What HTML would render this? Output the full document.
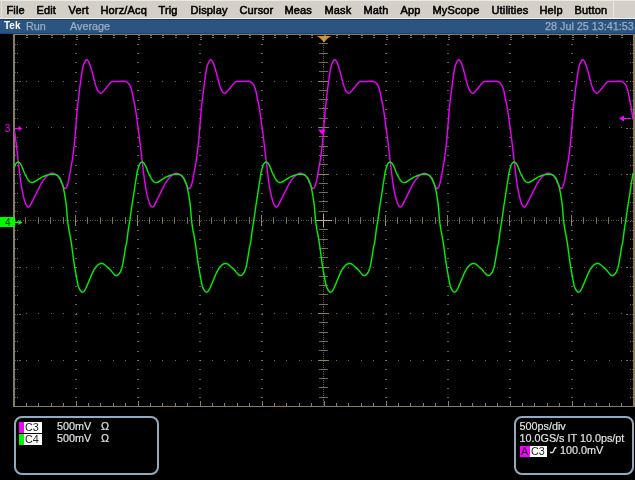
<!DOCTYPE html>
<html><head><meta charset="utf-8">
<style>
html,body{margin:0;padding:0;}
body{width:635px;height:480px;background:#000;position:relative;overflow:hidden;font-family:"Liberation Sans",sans-serif;}
#root{position:absolute;left:0;top:0;width:635px;height:480px;will-change:transform;}
#menu{position:absolute;left:0;top:0;width:635px;height:18px;background:#d4d0c8;border-top:1px solid #ebe9e4;box-sizing:border-box;}
#menu span{position:absolute;top:3px;font-size:11px;color:#000;line-height:13px;white-space:nowrap;-webkit-text-stroke:0.55px #000;letter-spacing:0.15px;}
#msep{position:absolute;left:613px;top:0;width:1px;height:18px;background:#e8e6e0;}
#hl{position:absolute;left:0;top:18px;width:635px;height:1px;background:#f2f0ea;}
#status{position:absolute;left:0;top:19px;width:635px;height:15px;background:#2a5582;border-top:1px solid #1d3c60;border-bottom:1px solid #1f4068;box-sizing:border-box;}
#status span{position:absolute;top:0px;font-size:10.8px;line-height:12px;color:#9cacc0;white-space:nowrap;-webkit-text-stroke:0.25px #9cacc0;}
svg{position:absolute;left:0;top:0;}
.panel{position:absolute;border:2px solid #93a9bf;border-radius:8px;box-sizing:border-box;}
.t{position:absolute;font-size:10.8px;line-height:12px;color:#e0e0e0;white-space:nowrap;-webkit-text-stroke:0.2px currentColor;}
.box{position:absolute;height:11px;}
</style></head><body><div id="root">
<div id="menu">
<span style="left:6.5px">File</span>
<span style="left:36.5px">Edit</span>
<span style="left:68.5px">Vert</span>
<span style="left:100.5px">Horz/Acq</span>
<span style="left:158.5px">Trig</span>
<span style="left:190.5px">Display</span>
<span style="left:239.5px">Cursor</span>
<span style="left:284.5px">Meas</span>
<span style="left:324.5px">Mask</span>
<span style="left:363.5px">Math</span>
<span style="left:400.5px">App</span>
<span style="left:432.5px">MyScope</span>
<span style="left:491.5px">Utilities</span>
<span style="left:539.5px">Help</span>
<span style="left:574.5px">Button</span>
</div>
<div id="msep"></div><div style="position:absolute;left:1px;top:0;width:1px;height:18px;background:#e6e3dc;"></div>
<div id="hl"></div>
<div id="status">
<span style="left:4px;color:#fff;font-weight:bold;font-size:10px;-webkit-text-stroke:0;">Tek</span>
<span style="left:26px">Run</span>
<span style="left:70px">Average</span>
<span style="left:545px">28 Jul 25 13:41:53</span>
</div>
<svg width="635" height="480" viewBox="0 0 635 480" shape-rendering="crispEdges">
<rect x="13" y="34" width="621" height="1" fill="#877d5e"/>
<rect x="13" y="406" width="621" height="1" fill="#877d5e"/>
<rect x="13" y="34" width="1.6" height="373" fill="#877d5e"/>
<rect x="633" y="34" width="2" height="373" fill="#877d5e"/>
<rect x="26" y="35" width="2" height="1" fill="#b8ac86" opacity="0.65"/><rect x="26" y="37" width="2" height="1" fill="#b8ac86" opacity="0.65"/>
<rect x="26" y="403" width="1" height="3" fill="#b8ac86" opacity="0.75"/>
<rect x="38" y="35" width="2" height="1" fill="#b8ac86" opacity="0.65"/><rect x="38" y="37" width="2" height="1" fill="#b8ac86" opacity="0.65"/>
<rect x="38" y="403" width="1" height="3" fill="#b8ac86" opacity="0.75"/>
<rect x="51" y="35" width="2" height="1" fill="#b8ac86" opacity="0.65"/><rect x="51" y="37" width="2" height="1" fill="#b8ac86" opacity="0.65"/>
<rect x="51" y="403" width="1" height="3" fill="#b8ac86" opacity="0.75"/>
<rect x="63" y="35" width="2" height="1" fill="#b8ac86" opacity="0.65"/><rect x="63" y="37" width="2" height="1" fill="#b8ac86" opacity="0.65"/>
<rect x="63" y="403" width="1" height="3" fill="#b8ac86" opacity="0.75"/>
<rect x="76" y="35" width="2" height="1" fill="#b8ac86" opacity="0.65"/><rect x="76" y="37" width="2" height="1" fill="#b8ac86" opacity="0.65"/><rect x="76" y="39" width="2" height="1" fill="#b8ac86" opacity="0.65"/>
<rect x="76" y="401" width="1" height="5" fill="#b8ac86" opacity="0.75"/>
<rect x="88" y="35" width="2" height="1" fill="#b8ac86" opacity="0.65"/><rect x="88" y="37" width="2" height="1" fill="#b8ac86" opacity="0.65"/>
<rect x="88" y="403" width="1" height="3" fill="#b8ac86" opacity="0.75"/>
<rect x="100" y="35" width="2" height="1" fill="#b8ac86" opacity="0.65"/><rect x="100" y="37" width="2" height="1" fill="#b8ac86" opacity="0.65"/>
<rect x="100" y="403" width="1" height="3" fill="#b8ac86" opacity="0.75"/>
<rect x="113" y="35" width="2" height="1" fill="#b8ac86" opacity="0.65"/><rect x="113" y="37" width="2" height="1" fill="#b8ac86" opacity="0.65"/>
<rect x="113" y="403" width="1" height="3" fill="#b8ac86" opacity="0.75"/>
<rect x="125" y="35" width="2" height="1" fill="#b8ac86" opacity="0.65"/><rect x="125" y="37" width="2" height="1" fill="#b8ac86" opacity="0.65"/>
<rect x="125" y="403" width="1" height="3" fill="#b8ac86" opacity="0.75"/>
<rect x="138" y="35" width="2" height="1" fill="#b8ac86" opacity="0.65"/><rect x="138" y="37" width="2" height="1" fill="#b8ac86" opacity="0.65"/><rect x="138" y="39" width="2" height="1" fill="#b8ac86" opacity="0.65"/>
<rect x="138" y="401" width="1" height="5" fill="#b8ac86" opacity="0.75"/>
<rect x="150" y="35" width="2" height="1" fill="#b8ac86" opacity="0.65"/><rect x="150" y="37" width="2" height="1" fill="#b8ac86" opacity="0.65"/>
<rect x="150" y="403" width="1" height="3" fill="#b8ac86" opacity="0.75"/>
<rect x="162" y="35" width="2" height="1" fill="#b8ac86" opacity="0.65"/><rect x="162" y="37" width="2" height="1" fill="#b8ac86" opacity="0.65"/>
<rect x="162" y="403" width="1" height="3" fill="#b8ac86" opacity="0.75"/>
<rect x="175" y="35" width="2" height="1" fill="#b8ac86" opacity="0.65"/><rect x="175" y="37" width="2" height="1" fill="#b8ac86" opacity="0.65"/>
<rect x="175" y="403" width="1" height="3" fill="#b8ac86" opacity="0.75"/>
<rect x="187" y="35" width="2" height="1" fill="#b8ac86" opacity="0.65"/><rect x="187" y="37" width="2" height="1" fill="#b8ac86" opacity="0.65"/>
<rect x="187" y="403" width="1" height="3" fill="#b8ac86" opacity="0.75"/>
<rect x="200" y="35" width="2" height="1" fill="#b8ac86" opacity="0.65"/><rect x="200" y="37" width="2" height="1" fill="#b8ac86" opacity="0.65"/><rect x="200" y="39" width="2" height="1" fill="#b8ac86" opacity="0.65"/>
<rect x="200" y="401" width="1" height="5" fill="#b8ac86" opacity="0.75"/>
<rect x="212" y="35" width="2" height="1" fill="#b8ac86" opacity="0.65"/><rect x="212" y="37" width="2" height="1" fill="#b8ac86" opacity="0.65"/>
<rect x="212" y="403" width="1" height="3" fill="#b8ac86" opacity="0.75"/>
<rect x="224" y="35" width="2" height="1" fill="#b8ac86" opacity="0.65"/><rect x="224" y="37" width="2" height="1" fill="#b8ac86" opacity="0.65"/>
<rect x="224" y="403" width="1" height="3" fill="#b8ac86" opacity="0.75"/>
<rect x="237" y="35" width="2" height="1" fill="#b8ac86" opacity="0.65"/><rect x="237" y="37" width="2" height="1" fill="#b8ac86" opacity="0.65"/>
<rect x="237" y="403" width="1" height="3" fill="#b8ac86" opacity="0.75"/>
<rect x="249" y="35" width="2" height="1" fill="#b8ac86" opacity="0.65"/><rect x="249" y="37" width="2" height="1" fill="#b8ac86" opacity="0.65"/>
<rect x="249" y="403" width="1" height="3" fill="#b8ac86" opacity="0.75"/>
<rect x="262" y="35" width="2" height="1" fill="#b8ac86" opacity="0.65"/><rect x="262" y="37" width="2" height="1" fill="#b8ac86" opacity="0.65"/><rect x="262" y="39" width="2" height="1" fill="#b8ac86" opacity="0.65"/>
<rect x="262" y="401" width="1" height="5" fill="#b8ac86" opacity="0.75"/>
<rect x="274" y="35" width="2" height="1" fill="#b8ac86" opacity="0.65"/><rect x="274" y="37" width="2" height="1" fill="#b8ac86" opacity="0.65"/>
<rect x="274" y="403" width="1" height="3" fill="#b8ac86" opacity="0.75"/>
<rect x="286" y="35" width="2" height="1" fill="#b8ac86" opacity="0.65"/><rect x="286" y="37" width="2" height="1" fill="#b8ac86" opacity="0.65"/>
<rect x="286" y="403" width="1" height="3" fill="#b8ac86" opacity="0.75"/>
<rect x="299" y="35" width="2" height="1" fill="#b8ac86" opacity="0.65"/><rect x="299" y="37" width="2" height="1" fill="#b8ac86" opacity="0.65"/>
<rect x="299" y="403" width="1" height="3" fill="#b8ac86" opacity="0.75"/>
<rect x="311" y="35" width="2" height="1" fill="#b8ac86" opacity="0.65"/><rect x="311" y="37" width="2" height="1" fill="#b8ac86" opacity="0.65"/>
<rect x="311" y="403" width="1" height="3" fill="#b8ac86" opacity="0.75"/>
<rect x="324" y="35" width="2" height="1" fill="#b8ac86" opacity="0.65"/><rect x="324" y="37" width="2" height="1" fill="#b8ac86" opacity="0.65"/><rect x="324" y="39" width="2" height="1" fill="#b8ac86" opacity="0.65"/>
<rect x="324" y="401" width="1" height="5" fill="#b8ac86" opacity="0.75"/>
<rect x="336" y="35" width="2" height="1" fill="#b8ac86" opacity="0.65"/><rect x="336" y="37" width="2" height="1" fill="#b8ac86" opacity="0.65"/>
<rect x="336" y="403" width="1" height="3" fill="#b8ac86" opacity="0.75"/>
<rect x="348" y="35" width="2" height="1" fill="#b8ac86" opacity="0.65"/><rect x="348" y="37" width="2" height="1" fill="#b8ac86" opacity="0.65"/>
<rect x="348" y="403" width="1" height="3" fill="#b8ac86" opacity="0.75"/>
<rect x="361" y="35" width="2" height="1" fill="#b8ac86" opacity="0.65"/><rect x="361" y="37" width="2" height="1" fill="#b8ac86" opacity="0.65"/>
<rect x="361" y="403" width="1" height="3" fill="#b8ac86" opacity="0.75"/>
<rect x="373" y="35" width="2" height="1" fill="#b8ac86" opacity="0.65"/><rect x="373" y="37" width="2" height="1" fill="#b8ac86" opacity="0.65"/>
<rect x="373" y="403" width="1" height="3" fill="#b8ac86" opacity="0.75"/>
<rect x="386" y="35" width="2" height="1" fill="#b8ac86" opacity="0.65"/><rect x="386" y="37" width="2" height="1" fill="#b8ac86" opacity="0.65"/><rect x="386" y="39" width="2" height="1" fill="#b8ac86" opacity="0.65"/>
<rect x="386" y="401" width="1" height="5" fill="#b8ac86" opacity="0.75"/>
<rect x="398" y="35" width="2" height="1" fill="#b8ac86" opacity="0.65"/><rect x="398" y="37" width="2" height="1" fill="#b8ac86" opacity="0.65"/>
<rect x="398" y="403" width="1" height="3" fill="#b8ac86" opacity="0.75"/>
<rect x="410" y="35" width="2" height="1" fill="#b8ac86" opacity="0.65"/><rect x="410" y="37" width="2" height="1" fill="#b8ac86" opacity="0.65"/>
<rect x="410" y="403" width="1" height="3" fill="#b8ac86" opacity="0.75"/>
<rect x="423" y="35" width="2" height="1" fill="#b8ac86" opacity="0.65"/><rect x="423" y="37" width="2" height="1" fill="#b8ac86" opacity="0.65"/>
<rect x="423" y="403" width="1" height="3" fill="#b8ac86" opacity="0.75"/>
<rect x="435" y="35" width="2" height="1" fill="#b8ac86" opacity="0.65"/><rect x="435" y="37" width="2" height="1" fill="#b8ac86" opacity="0.65"/>
<rect x="435" y="403" width="1" height="3" fill="#b8ac86" opacity="0.75"/>
<rect x="448" y="35" width="2" height="1" fill="#b8ac86" opacity="0.65"/><rect x="448" y="37" width="2" height="1" fill="#b8ac86" opacity="0.65"/><rect x="448" y="39" width="2" height="1" fill="#b8ac86" opacity="0.65"/>
<rect x="448" y="401" width="1" height="5" fill="#b8ac86" opacity="0.75"/>
<rect x="460" y="35" width="2" height="1" fill="#b8ac86" opacity="0.65"/><rect x="460" y="37" width="2" height="1" fill="#b8ac86" opacity="0.65"/>
<rect x="460" y="403" width="1" height="3" fill="#b8ac86" opacity="0.75"/>
<rect x="472" y="35" width="2" height="1" fill="#b8ac86" opacity="0.65"/><rect x="472" y="37" width="2" height="1" fill="#b8ac86" opacity="0.65"/>
<rect x="472" y="403" width="1" height="3" fill="#b8ac86" opacity="0.75"/>
<rect x="485" y="35" width="2" height="1" fill="#b8ac86" opacity="0.65"/><rect x="485" y="37" width="2" height="1" fill="#b8ac86" opacity="0.65"/>
<rect x="485" y="403" width="1" height="3" fill="#b8ac86" opacity="0.75"/>
<rect x="497" y="35" width="2" height="1" fill="#b8ac86" opacity="0.65"/><rect x="497" y="37" width="2" height="1" fill="#b8ac86" opacity="0.65"/>
<rect x="497" y="403" width="1" height="3" fill="#b8ac86" opacity="0.75"/>
<rect x="510" y="35" width="2" height="1" fill="#b8ac86" opacity="0.65"/><rect x="510" y="37" width="2" height="1" fill="#b8ac86" opacity="0.65"/><rect x="510" y="39" width="2" height="1" fill="#b8ac86" opacity="0.65"/>
<rect x="510" y="401" width="1" height="5" fill="#b8ac86" opacity="0.75"/>
<rect x="522" y="35" width="2" height="1" fill="#b8ac86" opacity="0.65"/><rect x="522" y="37" width="2" height="1" fill="#b8ac86" opacity="0.65"/>
<rect x="522" y="403" width="1" height="3" fill="#b8ac86" opacity="0.75"/>
<rect x="534" y="35" width="2" height="1" fill="#b8ac86" opacity="0.65"/><rect x="534" y="37" width="2" height="1" fill="#b8ac86" opacity="0.65"/>
<rect x="534" y="403" width="1" height="3" fill="#b8ac86" opacity="0.75"/>
<rect x="547" y="35" width="2" height="1" fill="#b8ac86" opacity="0.65"/><rect x="547" y="37" width="2" height="1" fill="#b8ac86" opacity="0.65"/>
<rect x="547" y="403" width="1" height="3" fill="#b8ac86" opacity="0.75"/>
<rect x="559" y="35" width="2" height="1" fill="#b8ac86" opacity="0.65"/><rect x="559" y="37" width="2" height="1" fill="#b8ac86" opacity="0.65"/>
<rect x="559" y="403" width="1" height="3" fill="#b8ac86" opacity="0.75"/>
<rect x="572" y="35" width="2" height="1" fill="#b8ac86" opacity="0.65"/><rect x="572" y="37" width="2" height="1" fill="#b8ac86" opacity="0.65"/><rect x="572" y="39" width="2" height="1" fill="#b8ac86" opacity="0.65"/>
<rect x="572" y="401" width="1" height="5" fill="#b8ac86" opacity="0.75"/>
<rect x="584" y="35" width="2" height="1" fill="#b8ac86" opacity="0.65"/><rect x="584" y="37" width="2" height="1" fill="#b8ac86" opacity="0.65"/>
<rect x="584" y="403" width="1" height="3" fill="#b8ac86" opacity="0.75"/>
<rect x="596" y="35" width="2" height="1" fill="#b8ac86" opacity="0.65"/><rect x="596" y="37" width="2" height="1" fill="#b8ac86" opacity="0.65"/>
<rect x="596" y="403" width="1" height="3" fill="#b8ac86" opacity="0.75"/>
<rect x="609" y="35" width="2" height="1" fill="#b8ac86" opacity="0.65"/><rect x="609" y="37" width="2" height="1" fill="#b8ac86" opacity="0.65"/>
<rect x="609" y="403" width="1" height="3" fill="#b8ac86" opacity="0.75"/>
<rect x="621" y="35" width="2" height="1" fill="#b8ac86" opacity="0.65"/><rect x="621" y="37" width="2" height="1" fill="#b8ac86" opacity="0.65"/>
<rect x="621" y="403" width="1" height="3" fill="#b8ac86" opacity="0.75"/>
<rect x="15" y="44" width="1" height="1" fill="#b8ac86" opacity="0.5"/><rect x="17" y="44" width="1" height="1" fill="#b8ac86" opacity="0.65"/>
<rect x="630" y="44" width="1" height="1" fill="#b8ac86" opacity="0.65"/><rect x="632" y="44" width="1" height="1" fill="#b8ac86" opacity="0.5"/>
<rect x="15" y="53" width="1" height="1" fill="#b8ac86" opacity="0.5"/><rect x="17" y="53" width="1" height="1" fill="#b8ac86" opacity="0.65"/>
<rect x="630" y="53" width="1" height="1" fill="#b8ac86" opacity="0.65"/><rect x="632" y="53" width="1" height="1" fill="#b8ac86" opacity="0.5"/>
<rect x="15" y="62" width="1" height="1" fill="#b8ac86" opacity="0.5"/><rect x="17" y="62" width="1" height="1" fill="#b8ac86" opacity="0.65"/>
<rect x="630" y="62" width="1" height="1" fill="#b8ac86" opacity="0.65"/><rect x="632" y="62" width="1" height="1" fill="#b8ac86" opacity="0.5"/>
<rect x="15" y="72" width="1" height="1" fill="#b8ac86" opacity="0.5"/><rect x="17" y="72" width="1" height="1" fill="#b8ac86" opacity="0.65"/>
<rect x="630" y="72" width="1" height="1" fill="#b8ac86" opacity="0.65"/><rect x="632" y="72" width="1" height="1" fill="#b8ac86" opacity="0.5"/>
<rect x="15" y="81" width="1" height="1" fill="#b8ac86" opacity="0.5"/><rect x="17" y="81" width="1" height="1" fill="#b8ac86" opacity="0.65"/>
<rect x="630" y="81" width="1" height="1" fill="#b8ac86" opacity="0.65"/><rect x="632" y="81" width="1" height="1" fill="#b8ac86" opacity="0.5"/>
<rect x="19" y="81" width="2" height="1" fill="#b8ac86" opacity="0.6"/><rect x="626" y="81" width="2" height="1" fill="#b8ac86" opacity="0.6"/>
<rect x="15" y="90" width="1" height="1" fill="#b8ac86" opacity="0.5"/><rect x="17" y="90" width="1" height="1" fill="#b8ac86" opacity="0.65"/>
<rect x="630" y="90" width="1" height="1" fill="#b8ac86" opacity="0.65"/><rect x="632" y="90" width="1" height="1" fill="#b8ac86" opacity="0.5"/>
<rect x="15" y="100" width="1" height="1" fill="#b8ac86" opacity="0.5"/><rect x="17" y="100" width="1" height="1" fill="#b8ac86" opacity="0.65"/>
<rect x="630" y="100" width="1" height="1" fill="#b8ac86" opacity="0.65"/><rect x="632" y="100" width="1" height="1" fill="#b8ac86" opacity="0.5"/>
<rect x="15" y="109" width="1" height="1" fill="#b8ac86" opacity="0.5"/><rect x="17" y="109" width="1" height="1" fill="#b8ac86" opacity="0.65"/>
<rect x="630" y="109" width="1" height="1" fill="#b8ac86" opacity="0.65"/><rect x="632" y="109" width="1" height="1" fill="#b8ac86" opacity="0.5"/>
<rect x="15" y="118" width="1" height="1" fill="#b8ac86" opacity="0.5"/><rect x="17" y="118" width="1" height="1" fill="#b8ac86" opacity="0.65"/>
<rect x="630" y="118" width="1" height="1" fill="#b8ac86" opacity="0.65"/><rect x="632" y="118" width="1" height="1" fill="#b8ac86" opacity="0.5"/>
<rect x="15" y="128" width="1" height="1" fill="#b8ac86" opacity="0.5"/><rect x="17" y="128" width="1" height="1" fill="#b8ac86" opacity="0.65"/>
<rect x="630" y="128" width="1" height="1" fill="#b8ac86" opacity="0.65"/><rect x="632" y="128" width="1" height="1" fill="#b8ac86" opacity="0.5"/>
<rect x="19" y="128" width="2" height="1" fill="#b8ac86" opacity="0.6"/><rect x="626" y="128" width="2" height="1" fill="#b8ac86" opacity="0.6"/>
<rect x="15" y="137" width="1" height="1" fill="#b8ac86" opacity="0.5"/><rect x="17" y="137" width="1" height="1" fill="#b8ac86" opacity="0.65"/>
<rect x="630" y="137" width="1" height="1" fill="#b8ac86" opacity="0.65"/><rect x="632" y="137" width="1" height="1" fill="#b8ac86" opacity="0.5"/>
<rect x="15" y="146" width="1" height="1" fill="#b8ac86" opacity="0.5"/><rect x="17" y="146" width="1" height="1" fill="#b8ac86" opacity="0.65"/>
<rect x="630" y="146" width="1" height="1" fill="#b8ac86" opacity="0.65"/><rect x="632" y="146" width="1" height="1" fill="#b8ac86" opacity="0.5"/>
<rect x="15" y="155" width="1" height="1" fill="#b8ac86" opacity="0.5"/><rect x="17" y="155" width="1" height="1" fill="#b8ac86" opacity="0.65"/>
<rect x="630" y="155" width="1" height="1" fill="#b8ac86" opacity="0.65"/><rect x="632" y="155" width="1" height="1" fill="#b8ac86" opacity="0.5"/>
<rect x="15" y="165" width="1" height="1" fill="#b8ac86" opacity="0.5"/><rect x="17" y="165" width="1" height="1" fill="#b8ac86" opacity="0.65"/>
<rect x="630" y="165" width="1" height="1" fill="#b8ac86" opacity="0.65"/><rect x="632" y="165" width="1" height="1" fill="#b8ac86" opacity="0.5"/>
<rect x="15" y="174" width="1" height="1" fill="#b8ac86" opacity="0.5"/><rect x="17" y="174" width="1" height="1" fill="#b8ac86" opacity="0.65"/>
<rect x="630" y="174" width="1" height="1" fill="#b8ac86" opacity="0.65"/><rect x="632" y="174" width="1" height="1" fill="#b8ac86" opacity="0.5"/>
<rect x="19" y="174" width="2" height="1" fill="#b8ac86" opacity="0.6"/><rect x="626" y="174" width="2" height="1" fill="#b8ac86" opacity="0.6"/>
<rect x="15" y="183" width="1" height="1" fill="#b8ac86" opacity="0.5"/><rect x="17" y="183" width="1" height="1" fill="#b8ac86" opacity="0.65"/>
<rect x="630" y="183" width="1" height="1" fill="#b8ac86" opacity="0.65"/><rect x="632" y="183" width="1" height="1" fill="#b8ac86" opacity="0.5"/>
<rect x="15" y="193" width="1" height="1" fill="#b8ac86" opacity="0.5"/><rect x="17" y="193" width="1" height="1" fill="#b8ac86" opacity="0.65"/>
<rect x="630" y="193" width="1" height="1" fill="#b8ac86" opacity="0.65"/><rect x="632" y="193" width="1" height="1" fill="#b8ac86" opacity="0.5"/>
<rect x="15" y="202" width="1" height="1" fill="#b8ac86" opacity="0.5"/><rect x="17" y="202" width="1" height="1" fill="#b8ac86" opacity="0.65"/>
<rect x="630" y="202" width="1" height="1" fill="#b8ac86" opacity="0.65"/><rect x="632" y="202" width="1" height="1" fill="#b8ac86" opacity="0.5"/>
<rect x="15" y="211" width="1" height="1" fill="#b8ac86" opacity="0.5"/><rect x="17" y="211" width="1" height="1" fill="#b8ac86" opacity="0.65"/>
<rect x="630" y="211" width="1" height="1" fill="#b8ac86" opacity="0.65"/><rect x="632" y="211" width="1" height="1" fill="#b8ac86" opacity="0.5"/>
<rect x="15" y="221" width="1" height="1" fill="#b8ac86" opacity="0.5"/><rect x="17" y="221" width="1" height="1" fill="#b8ac86" opacity="0.65"/>
<rect x="630" y="221" width="1" height="1" fill="#b8ac86" opacity="0.65"/><rect x="632" y="221" width="1" height="1" fill="#b8ac86" opacity="0.5"/>
<rect x="19" y="221" width="2" height="1" fill="#b8ac86" opacity="0.6"/><rect x="626" y="221" width="2" height="1" fill="#b8ac86" opacity="0.6"/>
<rect x="15" y="230" width="1" height="1" fill="#b8ac86" opacity="0.5"/><rect x="17" y="230" width="1" height="1" fill="#b8ac86" opacity="0.65"/>
<rect x="630" y="230" width="1" height="1" fill="#b8ac86" opacity="0.65"/><rect x="632" y="230" width="1" height="1" fill="#b8ac86" opacity="0.5"/>
<rect x="15" y="239" width="1" height="1" fill="#b8ac86" opacity="0.5"/><rect x="17" y="239" width="1" height="1" fill="#b8ac86" opacity="0.65"/>
<rect x="630" y="239" width="1" height="1" fill="#b8ac86" opacity="0.65"/><rect x="632" y="239" width="1" height="1" fill="#b8ac86" opacity="0.5"/>
<rect x="15" y="248" width="1" height="1" fill="#b8ac86" opacity="0.5"/><rect x="17" y="248" width="1" height="1" fill="#b8ac86" opacity="0.65"/>
<rect x="630" y="248" width="1" height="1" fill="#b8ac86" opacity="0.65"/><rect x="632" y="248" width="1" height="1" fill="#b8ac86" opacity="0.5"/>
<rect x="15" y="258" width="1" height="1" fill="#b8ac86" opacity="0.5"/><rect x="17" y="258" width="1" height="1" fill="#b8ac86" opacity="0.65"/>
<rect x="630" y="258" width="1" height="1" fill="#b8ac86" opacity="0.65"/><rect x="632" y="258" width="1" height="1" fill="#b8ac86" opacity="0.5"/>
<rect x="15" y="267" width="1" height="1" fill="#b8ac86" opacity="0.5"/><rect x="17" y="267" width="1" height="1" fill="#b8ac86" opacity="0.65"/>
<rect x="630" y="267" width="1" height="1" fill="#b8ac86" opacity="0.65"/><rect x="632" y="267" width="1" height="1" fill="#b8ac86" opacity="0.5"/>
<rect x="19" y="267" width="2" height="1" fill="#b8ac86" opacity="0.6"/><rect x="626" y="267" width="2" height="1" fill="#b8ac86" opacity="0.6"/>
<rect x="15" y="276" width="1" height="1" fill="#b8ac86" opacity="0.5"/><rect x="17" y="276" width="1" height="1" fill="#b8ac86" opacity="0.65"/>
<rect x="630" y="276" width="1" height="1" fill="#b8ac86" opacity="0.65"/><rect x="632" y="276" width="1" height="1" fill="#b8ac86" opacity="0.5"/>
<rect x="15" y="286" width="1" height="1" fill="#b8ac86" opacity="0.5"/><rect x="17" y="286" width="1" height="1" fill="#b8ac86" opacity="0.65"/>
<rect x="630" y="286" width="1" height="1" fill="#b8ac86" opacity="0.65"/><rect x="632" y="286" width="1" height="1" fill="#b8ac86" opacity="0.5"/>
<rect x="15" y="295" width="1" height="1" fill="#b8ac86" opacity="0.5"/><rect x="17" y="295" width="1" height="1" fill="#b8ac86" opacity="0.65"/>
<rect x="630" y="295" width="1" height="1" fill="#b8ac86" opacity="0.65"/><rect x="632" y="295" width="1" height="1" fill="#b8ac86" opacity="0.5"/>
<rect x="15" y="304" width="1" height="1" fill="#b8ac86" opacity="0.5"/><rect x="17" y="304" width="1" height="1" fill="#b8ac86" opacity="0.65"/>
<rect x="630" y="304" width="1" height="1" fill="#b8ac86" opacity="0.65"/><rect x="632" y="304" width="1" height="1" fill="#b8ac86" opacity="0.5"/>
<rect x="15" y="314" width="1" height="1" fill="#b8ac86" opacity="0.5"/><rect x="17" y="314" width="1" height="1" fill="#b8ac86" opacity="0.65"/>
<rect x="630" y="314" width="1" height="1" fill="#b8ac86" opacity="0.65"/><rect x="632" y="314" width="1" height="1" fill="#b8ac86" opacity="0.5"/>
<rect x="19" y="314" width="2" height="1" fill="#b8ac86" opacity="0.6"/><rect x="626" y="314" width="2" height="1" fill="#b8ac86" opacity="0.6"/>
<rect x="15" y="323" width="1" height="1" fill="#b8ac86" opacity="0.5"/><rect x="17" y="323" width="1" height="1" fill="#b8ac86" opacity="0.65"/>
<rect x="630" y="323" width="1" height="1" fill="#b8ac86" opacity="0.65"/><rect x="632" y="323" width="1" height="1" fill="#b8ac86" opacity="0.5"/>
<rect x="15" y="332" width="1" height="1" fill="#b8ac86" opacity="0.5"/><rect x="17" y="332" width="1" height="1" fill="#b8ac86" opacity="0.65"/>
<rect x="630" y="332" width="1" height="1" fill="#b8ac86" opacity="0.65"/><rect x="632" y="332" width="1" height="1" fill="#b8ac86" opacity="0.5"/>
<rect x="15" y="341" width="1" height="1" fill="#b8ac86" opacity="0.5"/><rect x="17" y="341" width="1" height="1" fill="#b8ac86" opacity="0.65"/>
<rect x="630" y="341" width="1" height="1" fill="#b8ac86" opacity="0.65"/><rect x="632" y="341" width="1" height="1" fill="#b8ac86" opacity="0.5"/>
<rect x="15" y="351" width="1" height="1" fill="#b8ac86" opacity="0.5"/><rect x="17" y="351" width="1" height="1" fill="#b8ac86" opacity="0.65"/>
<rect x="630" y="351" width="1" height="1" fill="#b8ac86" opacity="0.65"/><rect x="632" y="351" width="1" height="1" fill="#b8ac86" opacity="0.5"/>
<rect x="15" y="360" width="1" height="1" fill="#b8ac86" opacity="0.5"/><rect x="17" y="360" width="1" height="1" fill="#b8ac86" opacity="0.65"/>
<rect x="630" y="360" width="1" height="1" fill="#b8ac86" opacity="0.65"/><rect x="632" y="360" width="1" height="1" fill="#b8ac86" opacity="0.5"/>
<rect x="19" y="360" width="2" height="1" fill="#b8ac86" opacity="0.6"/><rect x="626" y="360" width="2" height="1" fill="#b8ac86" opacity="0.6"/>
<rect x="15" y="369" width="1" height="1" fill="#b8ac86" opacity="0.5"/><rect x="17" y="369" width="1" height="1" fill="#b8ac86" opacity="0.65"/>
<rect x="630" y="369" width="1" height="1" fill="#b8ac86" opacity="0.65"/><rect x="632" y="369" width="1" height="1" fill="#b8ac86" opacity="0.5"/>
<rect x="15" y="379" width="1" height="1" fill="#b8ac86" opacity="0.5"/><rect x="17" y="379" width="1" height="1" fill="#b8ac86" opacity="0.65"/>
<rect x="630" y="379" width="1" height="1" fill="#b8ac86" opacity="0.65"/><rect x="632" y="379" width="1" height="1" fill="#b8ac86" opacity="0.5"/>
<rect x="15" y="388" width="1" height="1" fill="#b8ac86" opacity="0.5"/><rect x="17" y="388" width="1" height="1" fill="#b8ac86" opacity="0.65"/>
<rect x="630" y="388" width="1" height="1" fill="#b8ac86" opacity="0.65"/><rect x="632" y="388" width="1" height="1" fill="#b8ac86" opacity="0.5"/>
<rect x="15" y="397" width="1" height="1" fill="#b8ac86" opacity="0.5"/><rect x="17" y="397" width="1" height="1" fill="#b8ac86" opacity="0.65"/>
<rect x="630" y="397" width="1" height="1" fill="#b8ac86" opacity="0.65"/><rect x="632" y="397" width="1" height="1" fill="#b8ac86" opacity="0.5"/>
<rect x="75" y="44" width="2" height="1" fill="#b8ac86" opacity="0.55"/>
<rect x="75" y="53" width="2" height="1" fill="#b8ac86" opacity="0.55"/>
<rect x="75" y="62" width="2" height="1" fill="#b8ac86" opacity="0.55"/>
<rect x="75" y="72" width="2" height="1" fill="#b8ac86" opacity="0.55"/>
<rect x="75" y="81" width="2" height="1" fill="#b8ac86" opacity="0.55"/>
<rect x="75" y="90" width="2" height="1" fill="#b8ac86" opacity="0.55"/>
<rect x="75" y="100" width="2" height="1" fill="#b8ac86" opacity="0.55"/>
<rect x="75" y="109" width="2" height="1" fill="#b8ac86" opacity="0.55"/>
<rect x="75" y="118" width="2" height="1" fill="#b8ac86" opacity="0.55"/>
<rect x="75" y="128" width="2" height="1" fill="#b8ac86" opacity="0.55"/>
<rect x="75" y="137" width="2" height="1" fill="#b8ac86" opacity="0.55"/>
<rect x="75" y="146" width="2" height="1" fill="#b8ac86" opacity="0.55"/>
<rect x="75" y="155" width="2" height="1" fill="#b8ac86" opacity="0.55"/>
<rect x="75" y="165" width="2" height="1" fill="#b8ac86" opacity="0.55"/>
<rect x="75" y="174" width="2" height="1" fill="#b8ac86" opacity="0.55"/>
<rect x="75" y="183" width="2" height="1" fill="#b8ac86" opacity="0.55"/>
<rect x="75" y="193" width="2" height="1" fill="#b8ac86" opacity="0.55"/>
<rect x="75" y="202" width="2" height="1" fill="#b8ac86" opacity="0.55"/>
<rect x="75" y="211" width="2" height="1" fill="#b8ac86" opacity="0.55"/>
<rect x="75" y="221" width="2" height="1" fill="#b8ac86" opacity="0.55"/>
<rect x="75" y="230" width="2" height="1" fill="#b8ac86" opacity="0.55"/>
<rect x="75" y="239" width="2" height="1" fill="#b8ac86" opacity="0.55"/>
<rect x="75" y="248" width="2" height="1" fill="#b8ac86" opacity="0.55"/>
<rect x="75" y="258" width="2" height="1" fill="#b8ac86" opacity="0.55"/>
<rect x="75" y="267" width="2" height="1" fill="#b8ac86" opacity="0.55"/>
<rect x="75" y="276" width="2" height="1" fill="#b8ac86" opacity="0.55"/>
<rect x="75" y="286" width="2" height="1" fill="#b8ac86" opacity="0.55"/>
<rect x="75" y="295" width="2" height="1" fill="#b8ac86" opacity="0.55"/>
<rect x="75" y="304" width="2" height="1" fill="#b8ac86" opacity="0.55"/>
<rect x="75" y="314" width="2" height="1" fill="#b8ac86" opacity="0.55"/>
<rect x="75" y="323" width="2" height="1" fill="#b8ac86" opacity="0.55"/>
<rect x="75" y="332" width="2" height="1" fill="#b8ac86" opacity="0.55"/>
<rect x="75" y="341" width="2" height="1" fill="#b8ac86" opacity="0.55"/>
<rect x="75" y="351" width="2" height="1" fill="#b8ac86" opacity="0.55"/>
<rect x="75" y="360" width="2" height="1" fill="#b8ac86" opacity="0.55"/>
<rect x="75" y="369" width="2" height="1" fill="#b8ac86" opacity="0.55"/>
<rect x="75" y="379" width="2" height="1" fill="#b8ac86" opacity="0.55"/>
<rect x="75" y="388" width="2" height="1" fill="#b8ac86" opacity="0.55"/>
<rect x="75" y="397" width="2" height="1" fill="#b8ac86" opacity="0.55"/>
<rect x="137" y="44" width="2" height="1" fill="#b8ac86" opacity="0.55"/>
<rect x="137" y="53" width="2" height="1" fill="#b8ac86" opacity="0.55"/>
<rect x="137" y="62" width="2" height="1" fill="#b8ac86" opacity="0.55"/>
<rect x="137" y="72" width="2" height="1" fill="#b8ac86" opacity="0.55"/>
<rect x="137" y="81" width="2" height="1" fill="#b8ac86" opacity="0.55"/>
<rect x="137" y="90" width="2" height="1" fill="#b8ac86" opacity="0.55"/>
<rect x="137" y="100" width="2" height="1" fill="#b8ac86" opacity="0.55"/>
<rect x="137" y="109" width="2" height="1" fill="#b8ac86" opacity="0.55"/>
<rect x="137" y="118" width="2" height="1" fill="#b8ac86" opacity="0.55"/>
<rect x="137" y="128" width="2" height="1" fill="#b8ac86" opacity="0.55"/>
<rect x="137" y="137" width="2" height="1" fill="#b8ac86" opacity="0.55"/>
<rect x="137" y="146" width="2" height="1" fill="#b8ac86" opacity="0.55"/>
<rect x="137" y="155" width="2" height="1" fill="#b8ac86" opacity="0.55"/>
<rect x="137" y="165" width="2" height="1" fill="#b8ac86" opacity="0.55"/>
<rect x="137" y="174" width="2" height="1" fill="#b8ac86" opacity="0.55"/>
<rect x="137" y="183" width="2" height="1" fill="#b8ac86" opacity="0.55"/>
<rect x="137" y="193" width="2" height="1" fill="#b8ac86" opacity="0.55"/>
<rect x="137" y="202" width="2" height="1" fill="#b8ac86" opacity="0.55"/>
<rect x="137" y="211" width="2" height="1" fill="#b8ac86" opacity="0.55"/>
<rect x="137" y="221" width="2" height="1" fill="#b8ac86" opacity="0.55"/>
<rect x="137" y="230" width="2" height="1" fill="#b8ac86" opacity="0.55"/>
<rect x="137" y="239" width="2" height="1" fill="#b8ac86" opacity="0.55"/>
<rect x="137" y="248" width="2" height="1" fill="#b8ac86" opacity="0.55"/>
<rect x="137" y="258" width="2" height="1" fill="#b8ac86" opacity="0.55"/>
<rect x="137" y="267" width="2" height="1" fill="#b8ac86" opacity="0.55"/>
<rect x="137" y="276" width="2" height="1" fill="#b8ac86" opacity="0.55"/>
<rect x="137" y="286" width="2" height="1" fill="#b8ac86" opacity="0.55"/>
<rect x="137" y="295" width="2" height="1" fill="#b8ac86" opacity="0.55"/>
<rect x="137" y="304" width="2" height="1" fill="#b8ac86" opacity="0.55"/>
<rect x="137" y="314" width="2" height="1" fill="#b8ac86" opacity="0.55"/>
<rect x="137" y="323" width="2" height="1" fill="#b8ac86" opacity="0.55"/>
<rect x="137" y="332" width="2" height="1" fill="#b8ac86" opacity="0.55"/>
<rect x="137" y="341" width="2" height="1" fill="#b8ac86" opacity="0.55"/>
<rect x="137" y="351" width="2" height="1" fill="#b8ac86" opacity="0.55"/>
<rect x="137" y="360" width="2" height="1" fill="#b8ac86" opacity="0.55"/>
<rect x="137" y="369" width="2" height="1" fill="#b8ac86" opacity="0.55"/>
<rect x="137" y="379" width="2" height="1" fill="#b8ac86" opacity="0.55"/>
<rect x="137" y="388" width="2" height="1" fill="#b8ac86" opacity="0.55"/>
<rect x="137" y="397" width="2" height="1" fill="#b8ac86" opacity="0.55"/>
<rect x="199" y="44" width="2" height="1" fill="#b8ac86" opacity="0.55"/>
<rect x="199" y="53" width="2" height="1" fill="#b8ac86" opacity="0.55"/>
<rect x="199" y="62" width="2" height="1" fill="#b8ac86" opacity="0.55"/>
<rect x="199" y="72" width="2" height="1" fill="#b8ac86" opacity="0.55"/>
<rect x="199" y="81" width="2" height="1" fill="#b8ac86" opacity="0.55"/>
<rect x="199" y="90" width="2" height="1" fill="#b8ac86" opacity="0.55"/>
<rect x="199" y="100" width="2" height="1" fill="#b8ac86" opacity="0.55"/>
<rect x="199" y="109" width="2" height="1" fill="#b8ac86" opacity="0.55"/>
<rect x="199" y="118" width="2" height="1" fill="#b8ac86" opacity="0.55"/>
<rect x="199" y="128" width="2" height="1" fill="#b8ac86" opacity="0.55"/>
<rect x="199" y="137" width="2" height="1" fill="#b8ac86" opacity="0.55"/>
<rect x="199" y="146" width="2" height="1" fill="#b8ac86" opacity="0.55"/>
<rect x="199" y="155" width="2" height="1" fill="#b8ac86" opacity="0.55"/>
<rect x="199" y="165" width="2" height="1" fill="#b8ac86" opacity="0.55"/>
<rect x="199" y="174" width="2" height="1" fill="#b8ac86" opacity="0.55"/>
<rect x="199" y="183" width="2" height="1" fill="#b8ac86" opacity="0.55"/>
<rect x="199" y="193" width="2" height="1" fill="#b8ac86" opacity="0.55"/>
<rect x="199" y="202" width="2" height="1" fill="#b8ac86" opacity="0.55"/>
<rect x="199" y="211" width="2" height="1" fill="#b8ac86" opacity="0.55"/>
<rect x="199" y="221" width="2" height="1" fill="#b8ac86" opacity="0.55"/>
<rect x="199" y="230" width="2" height="1" fill="#b8ac86" opacity="0.55"/>
<rect x="199" y="239" width="2" height="1" fill="#b8ac86" opacity="0.55"/>
<rect x="199" y="248" width="2" height="1" fill="#b8ac86" opacity="0.55"/>
<rect x="199" y="258" width="2" height="1" fill="#b8ac86" opacity="0.55"/>
<rect x="199" y="267" width="2" height="1" fill="#b8ac86" opacity="0.55"/>
<rect x="199" y="276" width="2" height="1" fill="#b8ac86" opacity="0.55"/>
<rect x="199" y="286" width="2" height="1" fill="#b8ac86" opacity="0.55"/>
<rect x="199" y="295" width="2" height="1" fill="#b8ac86" opacity="0.55"/>
<rect x="199" y="304" width="2" height="1" fill="#b8ac86" opacity="0.55"/>
<rect x="199" y="314" width="2" height="1" fill="#b8ac86" opacity="0.55"/>
<rect x="199" y="323" width="2" height="1" fill="#b8ac86" opacity="0.55"/>
<rect x="199" y="332" width="2" height="1" fill="#b8ac86" opacity="0.55"/>
<rect x="199" y="341" width="2" height="1" fill="#b8ac86" opacity="0.55"/>
<rect x="199" y="351" width="2" height="1" fill="#b8ac86" opacity="0.55"/>
<rect x="199" y="360" width="2" height="1" fill="#b8ac86" opacity="0.55"/>
<rect x="199" y="369" width="2" height="1" fill="#b8ac86" opacity="0.55"/>
<rect x="199" y="379" width="2" height="1" fill="#b8ac86" opacity="0.55"/>
<rect x="199" y="388" width="2" height="1" fill="#b8ac86" opacity="0.55"/>
<rect x="199" y="397" width="2" height="1" fill="#b8ac86" opacity="0.55"/>
<rect x="261" y="44" width="2" height="1" fill="#b8ac86" opacity="0.55"/>
<rect x="261" y="53" width="2" height="1" fill="#b8ac86" opacity="0.55"/>
<rect x="261" y="62" width="2" height="1" fill="#b8ac86" opacity="0.55"/>
<rect x="261" y="72" width="2" height="1" fill="#b8ac86" opacity="0.55"/>
<rect x="261" y="81" width="2" height="1" fill="#b8ac86" opacity="0.55"/>
<rect x="261" y="90" width="2" height="1" fill="#b8ac86" opacity="0.55"/>
<rect x="261" y="100" width="2" height="1" fill="#b8ac86" opacity="0.55"/>
<rect x="261" y="109" width="2" height="1" fill="#b8ac86" opacity="0.55"/>
<rect x="261" y="118" width="2" height="1" fill="#b8ac86" opacity="0.55"/>
<rect x="261" y="128" width="2" height="1" fill="#b8ac86" opacity="0.55"/>
<rect x="261" y="137" width="2" height="1" fill="#b8ac86" opacity="0.55"/>
<rect x="261" y="146" width="2" height="1" fill="#b8ac86" opacity="0.55"/>
<rect x="261" y="155" width="2" height="1" fill="#b8ac86" opacity="0.55"/>
<rect x="261" y="165" width="2" height="1" fill="#b8ac86" opacity="0.55"/>
<rect x="261" y="174" width="2" height="1" fill="#b8ac86" opacity="0.55"/>
<rect x="261" y="183" width="2" height="1" fill="#b8ac86" opacity="0.55"/>
<rect x="261" y="193" width="2" height="1" fill="#b8ac86" opacity="0.55"/>
<rect x="261" y="202" width="2" height="1" fill="#b8ac86" opacity="0.55"/>
<rect x="261" y="211" width="2" height="1" fill="#b8ac86" opacity="0.55"/>
<rect x="261" y="221" width="2" height="1" fill="#b8ac86" opacity="0.55"/>
<rect x="261" y="230" width="2" height="1" fill="#b8ac86" opacity="0.55"/>
<rect x="261" y="239" width="2" height="1" fill="#b8ac86" opacity="0.55"/>
<rect x="261" y="248" width="2" height="1" fill="#b8ac86" opacity="0.55"/>
<rect x="261" y="258" width="2" height="1" fill="#b8ac86" opacity="0.55"/>
<rect x="261" y="267" width="2" height="1" fill="#b8ac86" opacity="0.55"/>
<rect x="261" y="276" width="2" height="1" fill="#b8ac86" opacity="0.55"/>
<rect x="261" y="286" width="2" height="1" fill="#b8ac86" opacity="0.55"/>
<rect x="261" y="295" width="2" height="1" fill="#b8ac86" opacity="0.55"/>
<rect x="261" y="304" width="2" height="1" fill="#b8ac86" opacity="0.55"/>
<rect x="261" y="314" width="2" height="1" fill="#b8ac86" opacity="0.55"/>
<rect x="261" y="323" width="2" height="1" fill="#b8ac86" opacity="0.55"/>
<rect x="261" y="332" width="2" height="1" fill="#b8ac86" opacity="0.55"/>
<rect x="261" y="341" width="2" height="1" fill="#b8ac86" opacity="0.55"/>
<rect x="261" y="351" width="2" height="1" fill="#b8ac86" opacity="0.55"/>
<rect x="261" y="360" width="2" height="1" fill="#b8ac86" opacity="0.55"/>
<rect x="261" y="369" width="2" height="1" fill="#b8ac86" opacity="0.55"/>
<rect x="261" y="379" width="2" height="1" fill="#b8ac86" opacity="0.55"/>
<rect x="261" y="388" width="2" height="1" fill="#b8ac86" opacity="0.55"/>
<rect x="261" y="397" width="2" height="1" fill="#b8ac86" opacity="0.55"/>
<rect x="385" y="44" width="2" height="1" fill="#b8ac86" opacity="0.55"/>
<rect x="385" y="53" width="2" height="1" fill="#b8ac86" opacity="0.55"/>
<rect x="385" y="62" width="2" height="1" fill="#b8ac86" opacity="0.55"/>
<rect x="385" y="72" width="2" height="1" fill="#b8ac86" opacity="0.55"/>
<rect x="385" y="81" width="2" height="1" fill="#b8ac86" opacity="0.55"/>
<rect x="385" y="90" width="2" height="1" fill="#b8ac86" opacity="0.55"/>
<rect x="385" y="100" width="2" height="1" fill="#b8ac86" opacity="0.55"/>
<rect x="385" y="109" width="2" height="1" fill="#b8ac86" opacity="0.55"/>
<rect x="385" y="118" width="2" height="1" fill="#b8ac86" opacity="0.55"/>
<rect x="385" y="128" width="2" height="1" fill="#b8ac86" opacity="0.55"/>
<rect x="385" y="137" width="2" height="1" fill="#b8ac86" opacity="0.55"/>
<rect x="385" y="146" width="2" height="1" fill="#b8ac86" opacity="0.55"/>
<rect x="385" y="155" width="2" height="1" fill="#b8ac86" opacity="0.55"/>
<rect x="385" y="165" width="2" height="1" fill="#b8ac86" opacity="0.55"/>
<rect x="385" y="174" width="2" height="1" fill="#b8ac86" opacity="0.55"/>
<rect x="385" y="183" width="2" height="1" fill="#b8ac86" opacity="0.55"/>
<rect x="385" y="193" width="2" height="1" fill="#b8ac86" opacity="0.55"/>
<rect x="385" y="202" width="2" height="1" fill="#b8ac86" opacity="0.55"/>
<rect x="385" y="211" width="2" height="1" fill="#b8ac86" opacity="0.55"/>
<rect x="385" y="221" width="2" height="1" fill="#b8ac86" opacity="0.55"/>
<rect x="385" y="230" width="2" height="1" fill="#b8ac86" opacity="0.55"/>
<rect x="385" y="239" width="2" height="1" fill="#b8ac86" opacity="0.55"/>
<rect x="385" y="248" width="2" height="1" fill="#b8ac86" opacity="0.55"/>
<rect x="385" y="258" width="2" height="1" fill="#b8ac86" opacity="0.55"/>
<rect x="385" y="267" width="2" height="1" fill="#b8ac86" opacity="0.55"/>
<rect x="385" y="276" width="2" height="1" fill="#b8ac86" opacity="0.55"/>
<rect x="385" y="286" width="2" height="1" fill="#b8ac86" opacity="0.55"/>
<rect x="385" y="295" width="2" height="1" fill="#b8ac86" opacity="0.55"/>
<rect x="385" y="304" width="2" height="1" fill="#b8ac86" opacity="0.55"/>
<rect x="385" y="314" width="2" height="1" fill="#b8ac86" opacity="0.55"/>
<rect x="385" y="323" width="2" height="1" fill="#b8ac86" opacity="0.55"/>
<rect x="385" y="332" width="2" height="1" fill="#b8ac86" opacity="0.55"/>
<rect x="385" y="341" width="2" height="1" fill="#b8ac86" opacity="0.55"/>
<rect x="385" y="351" width="2" height="1" fill="#b8ac86" opacity="0.55"/>
<rect x="385" y="360" width="2" height="1" fill="#b8ac86" opacity="0.55"/>
<rect x="385" y="369" width="2" height="1" fill="#b8ac86" opacity="0.55"/>
<rect x="385" y="379" width="2" height="1" fill="#b8ac86" opacity="0.55"/>
<rect x="385" y="388" width="2" height="1" fill="#b8ac86" opacity="0.55"/>
<rect x="385" y="397" width="2" height="1" fill="#b8ac86" opacity="0.55"/>
<rect x="447" y="44" width="2" height="1" fill="#b8ac86" opacity="0.55"/>
<rect x="447" y="53" width="2" height="1" fill="#b8ac86" opacity="0.55"/>
<rect x="447" y="62" width="2" height="1" fill="#b8ac86" opacity="0.55"/>
<rect x="447" y="72" width="2" height="1" fill="#b8ac86" opacity="0.55"/>
<rect x="447" y="81" width="2" height="1" fill="#b8ac86" opacity="0.55"/>
<rect x="447" y="90" width="2" height="1" fill="#b8ac86" opacity="0.55"/>
<rect x="447" y="100" width="2" height="1" fill="#b8ac86" opacity="0.55"/>
<rect x="447" y="109" width="2" height="1" fill="#b8ac86" opacity="0.55"/>
<rect x="447" y="118" width="2" height="1" fill="#b8ac86" opacity="0.55"/>
<rect x="447" y="128" width="2" height="1" fill="#b8ac86" opacity="0.55"/>
<rect x="447" y="137" width="2" height="1" fill="#b8ac86" opacity="0.55"/>
<rect x="447" y="146" width="2" height="1" fill="#b8ac86" opacity="0.55"/>
<rect x="447" y="155" width="2" height="1" fill="#b8ac86" opacity="0.55"/>
<rect x="447" y="165" width="2" height="1" fill="#b8ac86" opacity="0.55"/>
<rect x="447" y="174" width="2" height="1" fill="#b8ac86" opacity="0.55"/>
<rect x="447" y="183" width="2" height="1" fill="#b8ac86" opacity="0.55"/>
<rect x="447" y="193" width="2" height="1" fill="#b8ac86" opacity="0.55"/>
<rect x="447" y="202" width="2" height="1" fill="#b8ac86" opacity="0.55"/>
<rect x="447" y="211" width="2" height="1" fill="#b8ac86" opacity="0.55"/>
<rect x="447" y="221" width="2" height="1" fill="#b8ac86" opacity="0.55"/>
<rect x="447" y="230" width="2" height="1" fill="#b8ac86" opacity="0.55"/>
<rect x="447" y="239" width="2" height="1" fill="#b8ac86" opacity="0.55"/>
<rect x="447" y="248" width="2" height="1" fill="#b8ac86" opacity="0.55"/>
<rect x="447" y="258" width="2" height="1" fill="#b8ac86" opacity="0.55"/>
<rect x="447" y="267" width="2" height="1" fill="#b8ac86" opacity="0.55"/>
<rect x="447" y="276" width="2" height="1" fill="#b8ac86" opacity="0.55"/>
<rect x="447" y="286" width="2" height="1" fill="#b8ac86" opacity="0.55"/>
<rect x="447" y="295" width="2" height="1" fill="#b8ac86" opacity="0.55"/>
<rect x="447" y="304" width="2" height="1" fill="#b8ac86" opacity="0.55"/>
<rect x="447" y="314" width="2" height="1" fill="#b8ac86" opacity="0.55"/>
<rect x="447" y="323" width="2" height="1" fill="#b8ac86" opacity="0.55"/>
<rect x="447" y="332" width="2" height="1" fill="#b8ac86" opacity="0.55"/>
<rect x="447" y="341" width="2" height="1" fill="#b8ac86" opacity="0.55"/>
<rect x="447" y="351" width="2" height="1" fill="#b8ac86" opacity="0.55"/>
<rect x="447" y="360" width="2" height="1" fill="#b8ac86" opacity="0.55"/>
<rect x="447" y="369" width="2" height="1" fill="#b8ac86" opacity="0.55"/>
<rect x="447" y="379" width="2" height="1" fill="#b8ac86" opacity="0.55"/>
<rect x="447" y="388" width="2" height="1" fill="#b8ac86" opacity="0.55"/>
<rect x="447" y="397" width="2" height="1" fill="#b8ac86" opacity="0.55"/>
<rect x="509" y="44" width="2" height="1" fill="#b8ac86" opacity="0.55"/>
<rect x="509" y="53" width="2" height="1" fill="#b8ac86" opacity="0.55"/>
<rect x="509" y="62" width="2" height="1" fill="#b8ac86" opacity="0.55"/>
<rect x="509" y="72" width="2" height="1" fill="#b8ac86" opacity="0.55"/>
<rect x="509" y="81" width="2" height="1" fill="#b8ac86" opacity="0.55"/>
<rect x="509" y="90" width="2" height="1" fill="#b8ac86" opacity="0.55"/>
<rect x="509" y="100" width="2" height="1" fill="#b8ac86" opacity="0.55"/>
<rect x="509" y="109" width="2" height="1" fill="#b8ac86" opacity="0.55"/>
<rect x="509" y="118" width="2" height="1" fill="#b8ac86" opacity="0.55"/>
<rect x="509" y="128" width="2" height="1" fill="#b8ac86" opacity="0.55"/>
<rect x="509" y="137" width="2" height="1" fill="#b8ac86" opacity="0.55"/>
<rect x="509" y="146" width="2" height="1" fill="#b8ac86" opacity="0.55"/>
<rect x="509" y="155" width="2" height="1" fill="#b8ac86" opacity="0.55"/>
<rect x="509" y="165" width="2" height="1" fill="#b8ac86" opacity="0.55"/>
<rect x="509" y="174" width="2" height="1" fill="#b8ac86" opacity="0.55"/>
<rect x="509" y="183" width="2" height="1" fill="#b8ac86" opacity="0.55"/>
<rect x="509" y="193" width="2" height="1" fill="#b8ac86" opacity="0.55"/>
<rect x="509" y="202" width="2" height="1" fill="#b8ac86" opacity="0.55"/>
<rect x="509" y="211" width="2" height="1" fill="#b8ac86" opacity="0.55"/>
<rect x="509" y="221" width="2" height="1" fill="#b8ac86" opacity="0.55"/>
<rect x="509" y="230" width="2" height="1" fill="#b8ac86" opacity="0.55"/>
<rect x="509" y="239" width="2" height="1" fill="#b8ac86" opacity="0.55"/>
<rect x="509" y="248" width="2" height="1" fill="#b8ac86" opacity="0.55"/>
<rect x="509" y="258" width="2" height="1" fill="#b8ac86" opacity="0.55"/>
<rect x="509" y="267" width="2" height="1" fill="#b8ac86" opacity="0.55"/>
<rect x="509" y="276" width="2" height="1" fill="#b8ac86" opacity="0.55"/>
<rect x="509" y="286" width="2" height="1" fill="#b8ac86" opacity="0.55"/>
<rect x="509" y="295" width="2" height="1" fill="#b8ac86" opacity="0.55"/>
<rect x="509" y="304" width="2" height="1" fill="#b8ac86" opacity="0.55"/>
<rect x="509" y="314" width="2" height="1" fill="#b8ac86" opacity="0.55"/>
<rect x="509" y="323" width="2" height="1" fill="#b8ac86" opacity="0.55"/>
<rect x="509" y="332" width="2" height="1" fill="#b8ac86" opacity="0.55"/>
<rect x="509" y="341" width="2" height="1" fill="#b8ac86" opacity="0.55"/>
<rect x="509" y="351" width="2" height="1" fill="#b8ac86" opacity="0.55"/>
<rect x="509" y="360" width="2" height="1" fill="#b8ac86" opacity="0.55"/>
<rect x="509" y="369" width="2" height="1" fill="#b8ac86" opacity="0.55"/>
<rect x="509" y="379" width="2" height="1" fill="#b8ac86" opacity="0.55"/>
<rect x="509" y="388" width="2" height="1" fill="#b8ac86" opacity="0.55"/>
<rect x="509" y="397" width="2" height="1" fill="#b8ac86" opacity="0.55"/>
<rect x="571" y="44" width="2" height="1" fill="#b8ac86" opacity="0.55"/>
<rect x="571" y="53" width="2" height="1" fill="#b8ac86" opacity="0.55"/>
<rect x="571" y="62" width="2" height="1" fill="#b8ac86" opacity="0.55"/>
<rect x="571" y="72" width="2" height="1" fill="#b8ac86" opacity="0.55"/>
<rect x="571" y="81" width="2" height="1" fill="#b8ac86" opacity="0.55"/>
<rect x="571" y="90" width="2" height="1" fill="#b8ac86" opacity="0.55"/>
<rect x="571" y="100" width="2" height="1" fill="#b8ac86" opacity="0.55"/>
<rect x="571" y="109" width="2" height="1" fill="#b8ac86" opacity="0.55"/>
<rect x="571" y="118" width="2" height="1" fill="#b8ac86" opacity="0.55"/>
<rect x="571" y="128" width="2" height="1" fill="#b8ac86" opacity="0.55"/>
<rect x="571" y="137" width="2" height="1" fill="#b8ac86" opacity="0.55"/>
<rect x="571" y="146" width="2" height="1" fill="#b8ac86" opacity="0.55"/>
<rect x="571" y="155" width="2" height="1" fill="#b8ac86" opacity="0.55"/>
<rect x="571" y="165" width="2" height="1" fill="#b8ac86" opacity="0.55"/>
<rect x="571" y="174" width="2" height="1" fill="#b8ac86" opacity="0.55"/>
<rect x="571" y="183" width="2" height="1" fill="#b8ac86" opacity="0.55"/>
<rect x="571" y="193" width="2" height="1" fill="#b8ac86" opacity="0.55"/>
<rect x="571" y="202" width="2" height="1" fill="#b8ac86" opacity="0.55"/>
<rect x="571" y="211" width="2" height="1" fill="#b8ac86" opacity="0.55"/>
<rect x="571" y="221" width="2" height="1" fill="#b8ac86" opacity="0.55"/>
<rect x="571" y="230" width="2" height="1" fill="#b8ac86" opacity="0.55"/>
<rect x="571" y="239" width="2" height="1" fill="#b8ac86" opacity="0.55"/>
<rect x="571" y="248" width="2" height="1" fill="#b8ac86" opacity="0.55"/>
<rect x="571" y="258" width="2" height="1" fill="#b8ac86" opacity="0.55"/>
<rect x="571" y="267" width="2" height="1" fill="#b8ac86" opacity="0.55"/>
<rect x="571" y="276" width="2" height="1" fill="#b8ac86" opacity="0.55"/>
<rect x="571" y="286" width="2" height="1" fill="#b8ac86" opacity="0.55"/>
<rect x="571" y="295" width="2" height="1" fill="#b8ac86" opacity="0.55"/>
<rect x="571" y="304" width="2" height="1" fill="#b8ac86" opacity="0.55"/>
<rect x="571" y="314" width="2" height="1" fill="#b8ac86" opacity="0.55"/>
<rect x="571" y="323" width="2" height="1" fill="#b8ac86" opacity="0.55"/>
<rect x="571" y="332" width="2" height="1" fill="#b8ac86" opacity="0.55"/>
<rect x="571" y="341" width="2" height="1" fill="#b8ac86" opacity="0.55"/>
<rect x="571" y="351" width="2" height="1" fill="#b8ac86" opacity="0.55"/>
<rect x="571" y="360" width="2" height="1" fill="#b8ac86" opacity="0.55"/>
<rect x="571" y="369" width="2" height="1" fill="#b8ac86" opacity="0.55"/>
<rect x="571" y="379" width="2" height="1" fill="#b8ac86" opacity="0.55"/>
<rect x="571" y="388" width="2" height="1" fill="#b8ac86" opacity="0.55"/>
<rect x="571" y="397" width="2" height="1" fill="#b8ac86" opacity="0.55"/>
<rect x="26" y="81" width="1" height="1" fill="#b8ac86" opacity="0.6"/>
<rect x="38" y="81" width="1" height="1" fill="#b8ac86" opacity="0.6"/>
<rect x="51" y="81" width="1" height="1" fill="#b8ac86" opacity="0.6"/>
<rect x="63" y="81" width="1" height="1" fill="#b8ac86" opacity="0.6"/>
<rect x="76" y="81" width="1" height="1" fill="#b8ac86" opacity="0.6"/>
<rect x="88" y="81" width="1" height="1" fill="#b8ac86" opacity="0.6"/>
<rect x="100" y="81" width="1" height="1" fill="#b8ac86" opacity="0.6"/>
<rect x="113" y="81" width="1" height="1" fill="#b8ac86" opacity="0.6"/>
<rect x="125" y="81" width="1" height="1" fill="#b8ac86" opacity="0.6"/>
<rect x="138" y="81" width="1" height="1" fill="#b8ac86" opacity="0.6"/>
<rect x="150" y="81" width="1" height="1" fill="#b8ac86" opacity="0.6"/>
<rect x="162" y="81" width="1" height="1" fill="#b8ac86" opacity="0.6"/>
<rect x="175" y="81" width="1" height="1" fill="#b8ac86" opacity="0.6"/>
<rect x="187" y="81" width="1" height="1" fill="#b8ac86" opacity="0.6"/>
<rect x="200" y="81" width="1" height="1" fill="#b8ac86" opacity="0.6"/>
<rect x="212" y="81" width="1" height="1" fill="#b8ac86" opacity="0.6"/>
<rect x="224" y="81" width="1" height="1" fill="#b8ac86" opacity="0.6"/>
<rect x="237" y="81" width="1" height="1" fill="#b8ac86" opacity="0.6"/>
<rect x="249" y="81" width="1" height="1" fill="#b8ac86" opacity="0.6"/>
<rect x="262" y="81" width="1" height="1" fill="#b8ac86" opacity="0.6"/>
<rect x="274" y="81" width="1" height="1" fill="#b8ac86" opacity="0.6"/>
<rect x="286" y="81" width="1" height="1" fill="#b8ac86" opacity="0.6"/>
<rect x="299" y="81" width="1" height="1" fill="#b8ac86" opacity="0.6"/>
<rect x="311" y="81" width="1" height="1" fill="#b8ac86" opacity="0.6"/>
<rect x="324" y="81" width="1" height="1" fill="#b8ac86" opacity="0.6"/>
<rect x="336" y="81" width="1" height="1" fill="#b8ac86" opacity="0.6"/>
<rect x="348" y="81" width="1" height="1" fill="#b8ac86" opacity="0.6"/>
<rect x="361" y="81" width="1" height="1" fill="#b8ac86" opacity="0.6"/>
<rect x="373" y="81" width="1" height="1" fill="#b8ac86" opacity="0.6"/>
<rect x="386" y="81" width="1" height="1" fill="#b8ac86" opacity="0.6"/>
<rect x="398" y="81" width="1" height="1" fill="#b8ac86" opacity="0.6"/>
<rect x="410" y="81" width="1" height="1" fill="#b8ac86" opacity="0.6"/>
<rect x="423" y="81" width="1" height="1" fill="#b8ac86" opacity="0.6"/>
<rect x="435" y="81" width="1" height="1" fill="#b8ac86" opacity="0.6"/>
<rect x="448" y="81" width="1" height="1" fill="#b8ac86" opacity="0.6"/>
<rect x="460" y="81" width="1" height="1" fill="#b8ac86" opacity="0.6"/>
<rect x="472" y="81" width="1" height="1" fill="#b8ac86" opacity="0.6"/>
<rect x="485" y="81" width="1" height="1" fill="#b8ac86" opacity="0.6"/>
<rect x="497" y="81" width="1" height="1" fill="#b8ac86" opacity="0.6"/>
<rect x="510" y="81" width="1" height="1" fill="#b8ac86" opacity="0.6"/>
<rect x="522" y="81" width="1" height="1" fill="#b8ac86" opacity="0.6"/>
<rect x="534" y="81" width="1" height="1" fill="#b8ac86" opacity="0.6"/>
<rect x="547" y="81" width="1" height="1" fill="#b8ac86" opacity="0.6"/>
<rect x="559" y="81" width="1" height="1" fill="#b8ac86" opacity="0.6"/>
<rect x="572" y="81" width="1" height="1" fill="#b8ac86" opacity="0.6"/>
<rect x="584" y="81" width="1" height="1" fill="#b8ac86" opacity="0.6"/>
<rect x="596" y="81" width="1" height="1" fill="#b8ac86" opacity="0.6"/>
<rect x="609" y="81" width="1" height="1" fill="#b8ac86" opacity="0.6"/>
<rect x="621" y="81" width="1" height="1" fill="#b8ac86" opacity="0.6"/>
<rect x="26" y="127" width="1" height="1" fill="#b8ac86" opacity="0.6"/>
<rect x="38" y="127" width="1" height="1" fill="#b8ac86" opacity="0.6"/>
<rect x="51" y="127" width="1" height="1" fill="#b8ac86" opacity="0.6"/>
<rect x="63" y="127" width="1" height="1" fill="#b8ac86" opacity="0.6"/>
<rect x="76" y="127" width="1" height="1" fill="#b8ac86" opacity="0.6"/>
<rect x="88" y="127" width="1" height="1" fill="#b8ac86" opacity="0.6"/>
<rect x="100" y="127" width="1" height="1" fill="#b8ac86" opacity="0.6"/>
<rect x="113" y="127" width="1" height="1" fill="#b8ac86" opacity="0.6"/>
<rect x="125" y="127" width="1" height="1" fill="#b8ac86" opacity="0.6"/>
<rect x="138" y="127" width="1" height="1" fill="#b8ac86" opacity="0.6"/>
<rect x="150" y="127" width="1" height="1" fill="#b8ac86" opacity="0.6"/>
<rect x="162" y="127" width="1" height="1" fill="#b8ac86" opacity="0.6"/>
<rect x="175" y="127" width="1" height="1" fill="#b8ac86" opacity="0.6"/>
<rect x="187" y="127" width="1" height="1" fill="#b8ac86" opacity="0.6"/>
<rect x="200" y="127" width="1" height="1" fill="#b8ac86" opacity="0.6"/>
<rect x="212" y="127" width="1" height="1" fill="#b8ac86" opacity="0.6"/>
<rect x="224" y="127" width="1" height="1" fill="#b8ac86" opacity="0.6"/>
<rect x="237" y="127" width="1" height="1" fill="#b8ac86" opacity="0.6"/>
<rect x="249" y="127" width="1" height="1" fill="#b8ac86" opacity="0.6"/>
<rect x="262" y="127" width="1" height="1" fill="#b8ac86" opacity="0.6"/>
<rect x="274" y="127" width="1" height="1" fill="#b8ac86" opacity="0.6"/>
<rect x="286" y="127" width="1" height="1" fill="#b8ac86" opacity="0.6"/>
<rect x="299" y="127" width="1" height="1" fill="#b8ac86" opacity="0.6"/>
<rect x="311" y="127" width="1" height="1" fill="#b8ac86" opacity="0.6"/>
<rect x="324" y="127" width="1" height="1" fill="#b8ac86" opacity="0.6"/>
<rect x="336" y="127" width="1" height="1" fill="#b8ac86" opacity="0.6"/>
<rect x="348" y="127" width="1" height="1" fill="#b8ac86" opacity="0.6"/>
<rect x="361" y="127" width="1" height="1" fill="#b8ac86" opacity="0.6"/>
<rect x="373" y="127" width="1" height="1" fill="#b8ac86" opacity="0.6"/>
<rect x="386" y="127" width="1" height="1" fill="#b8ac86" opacity="0.6"/>
<rect x="398" y="127" width="1" height="1" fill="#b8ac86" opacity="0.6"/>
<rect x="410" y="127" width="1" height="1" fill="#b8ac86" opacity="0.6"/>
<rect x="423" y="127" width="1" height="1" fill="#b8ac86" opacity="0.6"/>
<rect x="435" y="127" width="1" height="1" fill="#b8ac86" opacity="0.6"/>
<rect x="448" y="127" width="1" height="1" fill="#b8ac86" opacity="0.6"/>
<rect x="460" y="127" width="1" height="1" fill="#b8ac86" opacity="0.6"/>
<rect x="472" y="127" width="1" height="1" fill="#b8ac86" opacity="0.6"/>
<rect x="485" y="127" width="1" height="1" fill="#b8ac86" opacity="0.6"/>
<rect x="497" y="127" width="1" height="1" fill="#b8ac86" opacity="0.6"/>
<rect x="510" y="127" width="1" height="1" fill="#b8ac86" opacity="0.6"/>
<rect x="522" y="127" width="1" height="1" fill="#b8ac86" opacity="0.6"/>
<rect x="534" y="127" width="1" height="1" fill="#b8ac86" opacity="0.6"/>
<rect x="547" y="127" width="1" height="1" fill="#b8ac86" opacity="0.6"/>
<rect x="559" y="127" width="1" height="1" fill="#b8ac86" opacity="0.6"/>
<rect x="572" y="127" width="1" height="1" fill="#b8ac86" opacity="0.6"/>
<rect x="584" y="127" width="1" height="1" fill="#b8ac86" opacity="0.6"/>
<rect x="596" y="127" width="1" height="1" fill="#b8ac86" opacity="0.6"/>
<rect x="609" y="127" width="1" height="1" fill="#b8ac86" opacity="0.6"/>
<rect x="621" y="127" width="1" height="1" fill="#b8ac86" opacity="0.6"/>
<rect x="26" y="174" width="1" height="1" fill="#b8ac86" opacity="0.6"/>
<rect x="38" y="174" width="1" height="1" fill="#b8ac86" opacity="0.6"/>
<rect x="51" y="174" width="1" height="1" fill="#b8ac86" opacity="0.6"/>
<rect x="63" y="174" width="1" height="1" fill="#b8ac86" opacity="0.6"/>
<rect x="76" y="174" width="1" height="1" fill="#b8ac86" opacity="0.6"/>
<rect x="88" y="174" width="1" height="1" fill="#b8ac86" opacity="0.6"/>
<rect x="100" y="174" width="1" height="1" fill="#b8ac86" opacity="0.6"/>
<rect x="113" y="174" width="1" height="1" fill="#b8ac86" opacity="0.6"/>
<rect x="125" y="174" width="1" height="1" fill="#b8ac86" opacity="0.6"/>
<rect x="138" y="174" width="1" height="1" fill="#b8ac86" opacity="0.6"/>
<rect x="150" y="174" width="1" height="1" fill="#b8ac86" opacity="0.6"/>
<rect x="162" y="174" width="1" height="1" fill="#b8ac86" opacity="0.6"/>
<rect x="175" y="174" width="1" height="1" fill="#b8ac86" opacity="0.6"/>
<rect x="187" y="174" width="1" height="1" fill="#b8ac86" opacity="0.6"/>
<rect x="200" y="174" width="1" height="1" fill="#b8ac86" opacity="0.6"/>
<rect x="212" y="174" width="1" height="1" fill="#b8ac86" opacity="0.6"/>
<rect x="224" y="174" width="1" height="1" fill="#b8ac86" opacity="0.6"/>
<rect x="237" y="174" width="1" height="1" fill="#b8ac86" opacity="0.6"/>
<rect x="249" y="174" width="1" height="1" fill="#b8ac86" opacity="0.6"/>
<rect x="262" y="174" width="1" height="1" fill="#b8ac86" opacity="0.6"/>
<rect x="274" y="174" width="1" height="1" fill="#b8ac86" opacity="0.6"/>
<rect x="286" y="174" width="1" height="1" fill="#b8ac86" opacity="0.6"/>
<rect x="299" y="174" width="1" height="1" fill="#b8ac86" opacity="0.6"/>
<rect x="311" y="174" width="1" height="1" fill="#b8ac86" opacity="0.6"/>
<rect x="324" y="174" width="1" height="1" fill="#b8ac86" opacity="0.6"/>
<rect x="336" y="174" width="1" height="1" fill="#b8ac86" opacity="0.6"/>
<rect x="348" y="174" width="1" height="1" fill="#b8ac86" opacity="0.6"/>
<rect x="361" y="174" width="1" height="1" fill="#b8ac86" opacity="0.6"/>
<rect x="373" y="174" width="1" height="1" fill="#b8ac86" opacity="0.6"/>
<rect x="386" y="174" width="1" height="1" fill="#b8ac86" opacity="0.6"/>
<rect x="398" y="174" width="1" height="1" fill="#b8ac86" opacity="0.6"/>
<rect x="410" y="174" width="1" height="1" fill="#b8ac86" opacity="0.6"/>
<rect x="423" y="174" width="1" height="1" fill="#b8ac86" opacity="0.6"/>
<rect x="435" y="174" width="1" height="1" fill="#b8ac86" opacity="0.6"/>
<rect x="448" y="174" width="1" height="1" fill="#b8ac86" opacity="0.6"/>
<rect x="460" y="174" width="1" height="1" fill="#b8ac86" opacity="0.6"/>
<rect x="472" y="174" width="1" height="1" fill="#b8ac86" opacity="0.6"/>
<rect x="485" y="174" width="1" height="1" fill="#b8ac86" opacity="0.6"/>
<rect x="497" y="174" width="1" height="1" fill="#b8ac86" opacity="0.6"/>
<rect x="510" y="174" width="1" height="1" fill="#b8ac86" opacity="0.6"/>
<rect x="522" y="174" width="1" height="1" fill="#b8ac86" opacity="0.6"/>
<rect x="534" y="174" width="1" height="1" fill="#b8ac86" opacity="0.6"/>
<rect x="547" y="174" width="1" height="1" fill="#b8ac86" opacity="0.6"/>
<rect x="559" y="174" width="1" height="1" fill="#b8ac86" opacity="0.6"/>
<rect x="572" y="174" width="1" height="1" fill="#b8ac86" opacity="0.6"/>
<rect x="584" y="174" width="1" height="1" fill="#b8ac86" opacity="0.6"/>
<rect x="596" y="174" width="1" height="1" fill="#b8ac86" opacity="0.6"/>
<rect x="609" y="174" width="1" height="1" fill="#b8ac86" opacity="0.6"/>
<rect x="621" y="174" width="1" height="1" fill="#b8ac86" opacity="0.6"/>
<rect x="26" y="267" width="1" height="1" fill="#b8ac86" opacity="0.6"/>
<rect x="38" y="267" width="1" height="1" fill="#b8ac86" opacity="0.6"/>
<rect x="51" y="267" width="1" height="1" fill="#b8ac86" opacity="0.6"/>
<rect x="63" y="267" width="1" height="1" fill="#b8ac86" opacity="0.6"/>
<rect x="76" y="267" width="1" height="1" fill="#b8ac86" opacity="0.6"/>
<rect x="88" y="267" width="1" height="1" fill="#b8ac86" opacity="0.6"/>
<rect x="100" y="267" width="1" height="1" fill="#b8ac86" opacity="0.6"/>
<rect x="113" y="267" width="1" height="1" fill="#b8ac86" opacity="0.6"/>
<rect x="125" y="267" width="1" height="1" fill="#b8ac86" opacity="0.6"/>
<rect x="138" y="267" width="1" height="1" fill="#b8ac86" opacity="0.6"/>
<rect x="150" y="267" width="1" height="1" fill="#b8ac86" opacity="0.6"/>
<rect x="162" y="267" width="1" height="1" fill="#b8ac86" opacity="0.6"/>
<rect x="175" y="267" width="1" height="1" fill="#b8ac86" opacity="0.6"/>
<rect x="187" y="267" width="1" height="1" fill="#b8ac86" opacity="0.6"/>
<rect x="200" y="267" width="1" height="1" fill="#b8ac86" opacity="0.6"/>
<rect x="212" y="267" width="1" height="1" fill="#b8ac86" opacity="0.6"/>
<rect x="224" y="267" width="1" height="1" fill="#b8ac86" opacity="0.6"/>
<rect x="237" y="267" width="1" height="1" fill="#b8ac86" opacity="0.6"/>
<rect x="249" y="267" width="1" height="1" fill="#b8ac86" opacity="0.6"/>
<rect x="262" y="267" width="1" height="1" fill="#b8ac86" opacity="0.6"/>
<rect x="274" y="267" width="1" height="1" fill="#b8ac86" opacity="0.6"/>
<rect x="286" y="267" width="1" height="1" fill="#b8ac86" opacity="0.6"/>
<rect x="299" y="267" width="1" height="1" fill="#b8ac86" opacity="0.6"/>
<rect x="311" y="267" width="1" height="1" fill="#b8ac86" opacity="0.6"/>
<rect x="324" y="267" width="1" height="1" fill="#b8ac86" opacity="0.6"/>
<rect x="336" y="267" width="1" height="1" fill="#b8ac86" opacity="0.6"/>
<rect x="348" y="267" width="1" height="1" fill="#b8ac86" opacity="0.6"/>
<rect x="361" y="267" width="1" height="1" fill="#b8ac86" opacity="0.6"/>
<rect x="373" y="267" width="1" height="1" fill="#b8ac86" opacity="0.6"/>
<rect x="386" y="267" width="1" height="1" fill="#b8ac86" opacity="0.6"/>
<rect x="398" y="267" width="1" height="1" fill="#b8ac86" opacity="0.6"/>
<rect x="410" y="267" width="1" height="1" fill="#b8ac86" opacity="0.6"/>
<rect x="423" y="267" width="1" height="1" fill="#b8ac86" opacity="0.6"/>
<rect x="435" y="267" width="1" height="1" fill="#b8ac86" opacity="0.6"/>
<rect x="448" y="267" width="1" height="1" fill="#b8ac86" opacity="0.6"/>
<rect x="460" y="267" width="1" height="1" fill="#b8ac86" opacity="0.6"/>
<rect x="472" y="267" width="1" height="1" fill="#b8ac86" opacity="0.6"/>
<rect x="485" y="267" width="1" height="1" fill="#b8ac86" opacity="0.6"/>
<rect x="497" y="267" width="1" height="1" fill="#b8ac86" opacity="0.6"/>
<rect x="510" y="267" width="1" height="1" fill="#b8ac86" opacity="0.6"/>
<rect x="522" y="267" width="1" height="1" fill="#b8ac86" opacity="0.6"/>
<rect x="534" y="267" width="1" height="1" fill="#b8ac86" opacity="0.6"/>
<rect x="547" y="267" width="1" height="1" fill="#b8ac86" opacity="0.6"/>
<rect x="559" y="267" width="1" height="1" fill="#b8ac86" opacity="0.6"/>
<rect x="572" y="267" width="1" height="1" fill="#b8ac86" opacity="0.6"/>
<rect x="584" y="267" width="1" height="1" fill="#b8ac86" opacity="0.6"/>
<rect x="596" y="267" width="1" height="1" fill="#b8ac86" opacity="0.6"/>
<rect x="609" y="267" width="1" height="1" fill="#b8ac86" opacity="0.6"/>
<rect x="621" y="267" width="1" height="1" fill="#b8ac86" opacity="0.6"/>
<rect x="26" y="313" width="1" height="1" fill="#b8ac86" opacity="0.6"/>
<rect x="38" y="313" width="1" height="1" fill="#b8ac86" opacity="0.6"/>
<rect x="51" y="313" width="1" height="1" fill="#b8ac86" opacity="0.6"/>
<rect x="63" y="313" width="1" height="1" fill="#b8ac86" opacity="0.6"/>
<rect x="76" y="313" width="1" height="1" fill="#b8ac86" opacity="0.6"/>
<rect x="88" y="313" width="1" height="1" fill="#b8ac86" opacity="0.6"/>
<rect x="100" y="313" width="1" height="1" fill="#b8ac86" opacity="0.6"/>
<rect x="113" y="313" width="1" height="1" fill="#b8ac86" opacity="0.6"/>
<rect x="125" y="313" width="1" height="1" fill="#b8ac86" opacity="0.6"/>
<rect x="138" y="313" width="1" height="1" fill="#b8ac86" opacity="0.6"/>
<rect x="150" y="313" width="1" height="1" fill="#b8ac86" opacity="0.6"/>
<rect x="162" y="313" width="1" height="1" fill="#b8ac86" opacity="0.6"/>
<rect x="175" y="313" width="1" height="1" fill="#b8ac86" opacity="0.6"/>
<rect x="187" y="313" width="1" height="1" fill="#b8ac86" opacity="0.6"/>
<rect x="200" y="313" width="1" height="1" fill="#b8ac86" opacity="0.6"/>
<rect x="212" y="313" width="1" height="1" fill="#b8ac86" opacity="0.6"/>
<rect x="224" y="313" width="1" height="1" fill="#b8ac86" opacity="0.6"/>
<rect x="237" y="313" width="1" height="1" fill="#b8ac86" opacity="0.6"/>
<rect x="249" y="313" width="1" height="1" fill="#b8ac86" opacity="0.6"/>
<rect x="262" y="313" width="1" height="1" fill="#b8ac86" opacity="0.6"/>
<rect x="274" y="313" width="1" height="1" fill="#b8ac86" opacity="0.6"/>
<rect x="286" y="313" width="1" height="1" fill="#b8ac86" opacity="0.6"/>
<rect x="299" y="313" width="1" height="1" fill="#b8ac86" opacity="0.6"/>
<rect x="311" y="313" width="1" height="1" fill="#b8ac86" opacity="0.6"/>
<rect x="324" y="313" width="1" height="1" fill="#b8ac86" opacity="0.6"/>
<rect x="336" y="313" width="1" height="1" fill="#b8ac86" opacity="0.6"/>
<rect x="348" y="313" width="1" height="1" fill="#b8ac86" opacity="0.6"/>
<rect x="361" y="313" width="1" height="1" fill="#b8ac86" opacity="0.6"/>
<rect x="373" y="313" width="1" height="1" fill="#b8ac86" opacity="0.6"/>
<rect x="386" y="313" width="1" height="1" fill="#b8ac86" opacity="0.6"/>
<rect x="398" y="313" width="1" height="1" fill="#b8ac86" opacity="0.6"/>
<rect x="410" y="313" width="1" height="1" fill="#b8ac86" opacity="0.6"/>
<rect x="423" y="313" width="1" height="1" fill="#b8ac86" opacity="0.6"/>
<rect x="435" y="313" width="1" height="1" fill="#b8ac86" opacity="0.6"/>
<rect x="448" y="313" width="1" height="1" fill="#b8ac86" opacity="0.6"/>
<rect x="460" y="313" width="1" height="1" fill="#b8ac86" opacity="0.6"/>
<rect x="472" y="313" width="1" height="1" fill="#b8ac86" opacity="0.6"/>
<rect x="485" y="313" width="1" height="1" fill="#b8ac86" opacity="0.6"/>
<rect x="497" y="313" width="1" height="1" fill="#b8ac86" opacity="0.6"/>
<rect x="510" y="313" width="1" height="1" fill="#b8ac86" opacity="0.6"/>
<rect x="522" y="313" width="1" height="1" fill="#b8ac86" opacity="0.6"/>
<rect x="534" y="313" width="1" height="1" fill="#b8ac86" opacity="0.6"/>
<rect x="547" y="313" width="1" height="1" fill="#b8ac86" opacity="0.6"/>
<rect x="559" y="313" width="1" height="1" fill="#b8ac86" opacity="0.6"/>
<rect x="572" y="313" width="1" height="1" fill="#b8ac86" opacity="0.6"/>
<rect x="584" y="313" width="1" height="1" fill="#b8ac86" opacity="0.6"/>
<rect x="596" y="313" width="1" height="1" fill="#b8ac86" opacity="0.6"/>
<rect x="609" y="313" width="1" height="1" fill="#b8ac86" opacity="0.6"/>
<rect x="621" y="313" width="1" height="1" fill="#b8ac86" opacity="0.6"/>
<rect x="26" y="360" width="1" height="1" fill="#b8ac86" opacity="0.6"/>
<rect x="38" y="360" width="1" height="1" fill="#b8ac86" opacity="0.6"/>
<rect x="51" y="360" width="1" height="1" fill="#b8ac86" opacity="0.6"/>
<rect x="63" y="360" width="1" height="1" fill="#b8ac86" opacity="0.6"/>
<rect x="76" y="360" width="1" height="1" fill="#b8ac86" opacity="0.6"/>
<rect x="88" y="360" width="1" height="1" fill="#b8ac86" opacity="0.6"/>
<rect x="100" y="360" width="1" height="1" fill="#b8ac86" opacity="0.6"/>
<rect x="113" y="360" width="1" height="1" fill="#b8ac86" opacity="0.6"/>
<rect x="125" y="360" width="1" height="1" fill="#b8ac86" opacity="0.6"/>
<rect x="138" y="360" width="1" height="1" fill="#b8ac86" opacity="0.6"/>
<rect x="150" y="360" width="1" height="1" fill="#b8ac86" opacity="0.6"/>
<rect x="162" y="360" width="1" height="1" fill="#b8ac86" opacity="0.6"/>
<rect x="175" y="360" width="1" height="1" fill="#b8ac86" opacity="0.6"/>
<rect x="187" y="360" width="1" height="1" fill="#b8ac86" opacity="0.6"/>
<rect x="200" y="360" width="1" height="1" fill="#b8ac86" opacity="0.6"/>
<rect x="212" y="360" width="1" height="1" fill="#b8ac86" opacity="0.6"/>
<rect x="224" y="360" width="1" height="1" fill="#b8ac86" opacity="0.6"/>
<rect x="237" y="360" width="1" height="1" fill="#b8ac86" opacity="0.6"/>
<rect x="249" y="360" width="1" height="1" fill="#b8ac86" opacity="0.6"/>
<rect x="262" y="360" width="1" height="1" fill="#b8ac86" opacity="0.6"/>
<rect x="274" y="360" width="1" height="1" fill="#b8ac86" opacity="0.6"/>
<rect x="286" y="360" width="1" height="1" fill="#b8ac86" opacity="0.6"/>
<rect x="299" y="360" width="1" height="1" fill="#b8ac86" opacity="0.6"/>
<rect x="311" y="360" width="1" height="1" fill="#b8ac86" opacity="0.6"/>
<rect x="324" y="360" width="1" height="1" fill="#b8ac86" opacity="0.6"/>
<rect x="336" y="360" width="1" height="1" fill="#b8ac86" opacity="0.6"/>
<rect x="348" y="360" width="1" height="1" fill="#b8ac86" opacity="0.6"/>
<rect x="361" y="360" width="1" height="1" fill="#b8ac86" opacity="0.6"/>
<rect x="373" y="360" width="1" height="1" fill="#b8ac86" opacity="0.6"/>
<rect x="386" y="360" width="1" height="1" fill="#b8ac86" opacity="0.6"/>
<rect x="398" y="360" width="1" height="1" fill="#b8ac86" opacity="0.6"/>
<rect x="410" y="360" width="1" height="1" fill="#b8ac86" opacity="0.6"/>
<rect x="423" y="360" width="1" height="1" fill="#b8ac86" opacity="0.6"/>
<rect x="435" y="360" width="1" height="1" fill="#b8ac86" opacity="0.6"/>
<rect x="448" y="360" width="1" height="1" fill="#b8ac86" opacity="0.6"/>
<rect x="460" y="360" width="1" height="1" fill="#b8ac86" opacity="0.6"/>
<rect x="472" y="360" width="1" height="1" fill="#b8ac86" opacity="0.6"/>
<rect x="485" y="360" width="1" height="1" fill="#b8ac86" opacity="0.6"/>
<rect x="497" y="360" width="1" height="1" fill="#b8ac86" opacity="0.6"/>
<rect x="510" y="360" width="1" height="1" fill="#b8ac86" opacity="0.6"/>
<rect x="522" y="360" width="1" height="1" fill="#b8ac86" opacity="0.6"/>
<rect x="534" y="360" width="1" height="1" fill="#b8ac86" opacity="0.6"/>
<rect x="547" y="360" width="1" height="1" fill="#b8ac86" opacity="0.6"/>
<rect x="559" y="360" width="1" height="1" fill="#b8ac86" opacity="0.6"/>
<rect x="572" y="360" width="1" height="1" fill="#b8ac86" opacity="0.6"/>
<rect x="584" y="360" width="1" height="1" fill="#b8ac86" opacity="0.6"/>
<rect x="596" y="360" width="1" height="1" fill="#b8ac86" opacity="0.6"/>
<rect x="609" y="360" width="1" height="1" fill="#b8ac86" opacity="0.6"/>
<rect x="621" y="360" width="1" height="1" fill="#b8ac86" opacity="0.6"/>
<rect x="15.48" y="220.0" width="1" height="1" fill="#b8ac86" opacity="0.5"/>
<rect x="17.96" y="220.0" width="1" height="1" fill="#b8ac86" opacity="0.5"/>
<rect x="20.44" y="220.0" width="1" height="1" fill="#b8ac86" opacity="0.5"/>
<rect x="22.92" y="220.0" width="1" height="1" fill="#b8ac86" opacity="0.5"/>
<rect x="27.88" y="220.0" width="1" height="1" fill="#b8ac86" opacity="0.5"/>
<rect x="30.36" y="220.0" width="1" height="1" fill="#b8ac86" opacity="0.5"/>
<rect x="32.84" y="220.0" width="1" height="1" fill="#b8ac86" opacity="0.5"/>
<rect x="35.32" y="220.0" width="1" height="1" fill="#b8ac86" opacity="0.5"/>
<rect x="40.28" y="220.0" width="1" height="1" fill="#b8ac86" opacity="0.5"/>
<rect x="42.76" y="220.0" width="1" height="1" fill="#b8ac86" opacity="0.5"/>
<rect x="45.24" y="220.0" width="1" height="1" fill="#b8ac86" opacity="0.5"/>
<rect x="47.72" y="220.0" width="1" height="1" fill="#b8ac86" opacity="0.5"/>
<rect x="52.68" y="220.0" width="1" height="1" fill="#b8ac86" opacity="0.5"/>
<rect x="55.16" y="220.0" width="1" height="1" fill="#b8ac86" opacity="0.5"/>
<rect x="57.64" y="220.0" width="1" height="1" fill="#b8ac86" opacity="0.5"/>
<rect x="60.12" y="220.0" width="1" height="1" fill="#b8ac86" opacity="0.5"/>
<rect x="65.08" y="220.0" width="1" height="1" fill="#b8ac86" opacity="0.5"/>
<rect x="67.56" y="220.0" width="1" height="1" fill="#b8ac86" opacity="0.5"/>
<rect x="70.04" y="220.0" width="1" height="1" fill="#b8ac86" opacity="0.5"/>
<rect x="72.52" y="220.0" width="1" height="1" fill="#b8ac86" opacity="0.5"/>
<rect x="77.48" y="220.0" width="1" height="1" fill="#b8ac86" opacity="0.5"/>
<rect x="79.96" y="220.0" width="1" height="1" fill="#b8ac86" opacity="0.5"/>
<rect x="82.44" y="220.0" width="1" height="1" fill="#b8ac86" opacity="0.5"/>
<rect x="84.92" y="220.0" width="1" height="1" fill="#b8ac86" opacity="0.5"/>
<rect x="89.88" y="220.0" width="1" height="1" fill="#b8ac86" opacity="0.5"/>
<rect x="92.36" y="220.0" width="1" height="1" fill="#b8ac86" opacity="0.5"/>
<rect x="94.84" y="220.0" width="1" height="1" fill="#b8ac86" opacity="0.5"/>
<rect x="97.32" y="220.0" width="1" height="1" fill="#b8ac86" opacity="0.5"/>
<rect x="102.28" y="220.0" width="1" height="1" fill="#b8ac86" opacity="0.5"/>
<rect x="104.76" y="220.0" width="1" height="1" fill="#b8ac86" opacity="0.5"/>
<rect x="107.24" y="220.0" width="1" height="1" fill="#b8ac86" opacity="0.5"/>
<rect x="109.72" y="220.0" width="1" height="1" fill="#b8ac86" opacity="0.5"/>
<rect x="114.68" y="220.0" width="1" height="1" fill="#b8ac86" opacity="0.5"/>
<rect x="117.16" y="220.0" width="1" height="1" fill="#b8ac86" opacity="0.5"/>
<rect x="119.64" y="220.0" width="1" height="1" fill="#b8ac86" opacity="0.5"/>
<rect x="122.12" y="220.0" width="1" height="1" fill="#b8ac86" opacity="0.5"/>
<rect x="127.08" y="220.0" width="1" height="1" fill="#b8ac86" opacity="0.5"/>
<rect x="129.56" y="220.0" width="1" height="1" fill="#b8ac86" opacity="0.5"/>
<rect x="132.04" y="220.0" width="1" height="1" fill="#b8ac86" opacity="0.5"/>
<rect x="134.52" y="220.0" width="1" height="1" fill="#b8ac86" opacity="0.5"/>
<rect x="139.48" y="220.0" width="1" height="1" fill="#b8ac86" opacity="0.5"/>
<rect x="141.96" y="220.0" width="1" height="1" fill="#b8ac86" opacity="0.5"/>
<rect x="144.44" y="220.0" width="1" height="1" fill="#b8ac86" opacity="0.5"/>
<rect x="146.92" y="220.0" width="1" height="1" fill="#b8ac86" opacity="0.5"/>
<rect x="151.88" y="220.0" width="1" height="1" fill="#b8ac86" opacity="0.5"/>
<rect x="154.36" y="220.0" width="1" height="1" fill="#b8ac86" opacity="0.5"/>
<rect x="156.84" y="220.0" width="1" height="1" fill="#b8ac86" opacity="0.5"/>
<rect x="159.32" y="220.0" width="1" height="1" fill="#b8ac86" opacity="0.5"/>
<rect x="164.28" y="220.0" width="1" height="1" fill="#b8ac86" opacity="0.5"/>
<rect x="166.76" y="220.0" width="1" height="1" fill="#b8ac86" opacity="0.5"/>
<rect x="169.24" y="220.0" width="1" height="1" fill="#b8ac86" opacity="0.5"/>
<rect x="171.72" y="220.0" width="1" height="1" fill="#b8ac86" opacity="0.5"/>
<rect x="176.68" y="220.0" width="1" height="1" fill="#b8ac86" opacity="0.5"/>
<rect x="179.16" y="220.0" width="1" height="1" fill="#b8ac86" opacity="0.5"/>
<rect x="181.64" y="220.0" width="1" height="1" fill="#b8ac86" opacity="0.5"/>
<rect x="184.12" y="220.0" width="1" height="1" fill="#b8ac86" opacity="0.5"/>
<rect x="189.08" y="220.0" width="1" height="1" fill="#b8ac86" opacity="0.5"/>
<rect x="191.56" y="220.0" width="1" height="1" fill="#b8ac86" opacity="0.5"/>
<rect x="194.04" y="220.0" width="1" height="1" fill="#b8ac86" opacity="0.5"/>
<rect x="196.52" y="220.0" width="1" height="1" fill="#b8ac86" opacity="0.5"/>
<rect x="201.48" y="220.0" width="1" height="1" fill="#b8ac86" opacity="0.5"/>
<rect x="203.96" y="220.0" width="1" height="1" fill="#b8ac86" opacity="0.5"/>
<rect x="206.44" y="220.0" width="1" height="1" fill="#b8ac86" opacity="0.5"/>
<rect x="208.92" y="220.0" width="1" height="1" fill="#b8ac86" opacity="0.5"/>
<rect x="213.88" y="220.0" width="1" height="1" fill="#b8ac86" opacity="0.5"/>
<rect x="216.36" y="220.0" width="1" height="1" fill="#b8ac86" opacity="0.5"/>
<rect x="218.84" y="220.0" width="1" height="1" fill="#b8ac86" opacity="0.5"/>
<rect x="221.32" y="220.0" width="1" height="1" fill="#b8ac86" opacity="0.5"/>
<rect x="226.28" y="220.0" width="1" height="1" fill="#b8ac86" opacity="0.5"/>
<rect x="228.76" y="220.0" width="1" height="1" fill="#b8ac86" opacity="0.5"/>
<rect x="231.24" y="220.0" width="1" height="1" fill="#b8ac86" opacity="0.5"/>
<rect x="233.72" y="220.0" width="1" height="1" fill="#b8ac86" opacity="0.5"/>
<rect x="238.68" y="220.0" width="1" height="1" fill="#b8ac86" opacity="0.5"/>
<rect x="241.16" y="220.0" width="1" height="1" fill="#b8ac86" opacity="0.5"/>
<rect x="243.64" y="220.0" width="1" height="1" fill="#b8ac86" opacity="0.5"/>
<rect x="246.12" y="220.0" width="1" height="1" fill="#b8ac86" opacity="0.5"/>
<rect x="251.08" y="220.0" width="1" height="1" fill="#b8ac86" opacity="0.5"/>
<rect x="253.56" y="220.0" width="1" height="1" fill="#b8ac86" opacity="0.5"/>
<rect x="256.04" y="220.0" width="1" height="1" fill="#b8ac86" opacity="0.5"/>
<rect x="258.52" y="220.0" width="1" height="1" fill="#b8ac86" opacity="0.5"/>
<rect x="263.48" y="220.0" width="1" height="1" fill="#b8ac86" opacity="0.5"/>
<rect x="265.96" y="220.0" width="1" height="1" fill="#b8ac86" opacity="0.5"/>
<rect x="268.44" y="220.0" width="1" height="1" fill="#b8ac86" opacity="0.5"/>
<rect x="270.92" y="220.0" width="1" height="1" fill="#b8ac86" opacity="0.5"/>
<rect x="275.88" y="220.0" width="1" height="1" fill="#b8ac86" opacity="0.5"/>
<rect x="278.36" y="220.0" width="1" height="1" fill="#b8ac86" opacity="0.5"/>
<rect x="280.84" y="220.0" width="1" height="1" fill="#b8ac86" opacity="0.5"/>
<rect x="283.32" y="220.0" width="1" height="1" fill="#b8ac86" opacity="0.5"/>
<rect x="288.28" y="220.0" width="1" height="1" fill="#b8ac86" opacity="0.5"/>
<rect x="290.76" y="220.0" width="1" height="1" fill="#b8ac86" opacity="0.5"/>
<rect x="293.24" y="220.0" width="1" height="1" fill="#b8ac86" opacity="0.5"/>
<rect x="295.72" y="220.0" width="1" height="1" fill="#b8ac86" opacity="0.5"/>
<rect x="300.68" y="220.0" width="1" height="1" fill="#b8ac86" opacity="0.5"/>
<rect x="303.16" y="220.0" width="1" height="1" fill="#b8ac86" opacity="0.5"/>
<rect x="305.64" y="220.0" width="1" height="1" fill="#b8ac86" opacity="0.5"/>
<rect x="308.12" y="220.0" width="1" height="1" fill="#b8ac86" opacity="0.5"/>
<rect x="313.08" y="220.0" width="1" height="1" fill="#b8ac86" opacity="0.5"/>
<rect x="315.56" y="220.0" width="1" height="1" fill="#b8ac86" opacity="0.5"/>
<rect x="318.04" y="220.0" width="1" height="1" fill="#b8ac86" opacity="0.5"/>
<rect x="320.52" y="220.0" width="1" height="1" fill="#b8ac86" opacity="0.5"/>
<rect x="325.48" y="220.0" width="1" height="1" fill="#b8ac86" opacity="0.5"/>
<rect x="327.96" y="220.0" width="1" height="1" fill="#b8ac86" opacity="0.5"/>
<rect x="330.44" y="220.0" width="1" height="1" fill="#b8ac86" opacity="0.5"/>
<rect x="332.92" y="220.0" width="1" height="1" fill="#b8ac86" opacity="0.5"/>
<rect x="337.88" y="220.0" width="1" height="1" fill="#b8ac86" opacity="0.5"/>
<rect x="340.36" y="220.0" width="1" height="1" fill="#b8ac86" opacity="0.5"/>
<rect x="342.84" y="220.0" width="1" height="1" fill="#b8ac86" opacity="0.5"/>
<rect x="345.32" y="220.0" width="1" height="1" fill="#b8ac86" opacity="0.5"/>
<rect x="350.28" y="220.0" width="1" height="1" fill="#b8ac86" opacity="0.5"/>
<rect x="352.76" y="220.0" width="1" height="1" fill="#b8ac86" opacity="0.5"/>
<rect x="355.24" y="220.0" width="1" height="1" fill="#b8ac86" opacity="0.5"/>
<rect x="357.72" y="220.0" width="1" height="1" fill="#b8ac86" opacity="0.5"/>
<rect x="362.68" y="220.0" width="1" height="1" fill="#b8ac86" opacity="0.5"/>
<rect x="365.16" y="220.0" width="1" height="1" fill="#b8ac86" opacity="0.5"/>
<rect x="367.64" y="220.0" width="1" height="1" fill="#b8ac86" opacity="0.5"/>
<rect x="370.12" y="220.0" width="1" height="1" fill="#b8ac86" opacity="0.5"/>
<rect x="375.08" y="220.0" width="1" height="1" fill="#b8ac86" opacity="0.5"/>
<rect x="377.56" y="220.0" width="1" height="1" fill="#b8ac86" opacity="0.5"/>
<rect x="380.04" y="220.0" width="1" height="1" fill="#b8ac86" opacity="0.5"/>
<rect x="382.52" y="220.0" width="1" height="1" fill="#b8ac86" opacity="0.5"/>
<rect x="387.48" y="220.0" width="1" height="1" fill="#b8ac86" opacity="0.5"/>
<rect x="389.96" y="220.0" width="1" height="1" fill="#b8ac86" opacity="0.5"/>
<rect x="392.44" y="220.0" width="1" height="1" fill="#b8ac86" opacity="0.5"/>
<rect x="394.92" y="220.0" width="1" height="1" fill="#b8ac86" opacity="0.5"/>
<rect x="399.88" y="220.0" width="1" height="1" fill="#b8ac86" opacity="0.5"/>
<rect x="402.36" y="220.0" width="1" height="1" fill="#b8ac86" opacity="0.5"/>
<rect x="404.84" y="220.0" width="1" height="1" fill="#b8ac86" opacity="0.5"/>
<rect x="407.32" y="220.0" width="1" height="1" fill="#b8ac86" opacity="0.5"/>
<rect x="412.28" y="220.0" width="1" height="1" fill="#b8ac86" opacity="0.5"/>
<rect x="414.76" y="220.0" width="1" height="1" fill="#b8ac86" opacity="0.5"/>
<rect x="417.24" y="220.0" width="1" height="1" fill="#b8ac86" opacity="0.5"/>
<rect x="419.72" y="220.0" width="1" height="1" fill="#b8ac86" opacity="0.5"/>
<rect x="424.68" y="220.0" width="1" height="1" fill="#b8ac86" opacity="0.5"/>
<rect x="427.16" y="220.0" width="1" height="1" fill="#b8ac86" opacity="0.5"/>
<rect x="429.64" y="220.0" width="1" height="1" fill="#b8ac86" opacity="0.5"/>
<rect x="432.12" y="220.0" width="1" height="1" fill="#b8ac86" opacity="0.5"/>
<rect x="437.08" y="220.0" width="1" height="1" fill="#b8ac86" opacity="0.5"/>
<rect x="439.56" y="220.0" width="1" height="1" fill="#b8ac86" opacity="0.5"/>
<rect x="442.04" y="220.0" width="1" height="1" fill="#b8ac86" opacity="0.5"/>
<rect x="444.52" y="220.0" width="1" height="1" fill="#b8ac86" opacity="0.5"/>
<rect x="449.48" y="220.0" width="1" height="1" fill="#b8ac86" opacity="0.5"/>
<rect x="451.96" y="220.0" width="1" height="1" fill="#b8ac86" opacity="0.5"/>
<rect x="454.44" y="220.0" width="1" height="1" fill="#b8ac86" opacity="0.5"/>
<rect x="456.92" y="220.0" width="1" height="1" fill="#b8ac86" opacity="0.5"/>
<rect x="461.88" y="220.0" width="1" height="1" fill="#b8ac86" opacity="0.5"/>
<rect x="464.36" y="220.0" width="1" height="1" fill="#b8ac86" opacity="0.5"/>
<rect x="466.84" y="220.0" width="1" height="1" fill="#b8ac86" opacity="0.5"/>
<rect x="469.32" y="220.0" width="1" height="1" fill="#b8ac86" opacity="0.5"/>
<rect x="474.28" y="220.0" width="1" height="1" fill="#b8ac86" opacity="0.5"/>
<rect x="476.76" y="220.0" width="1" height="1" fill="#b8ac86" opacity="0.5"/>
<rect x="479.24" y="220.0" width="1" height="1" fill="#b8ac86" opacity="0.5"/>
<rect x="481.72" y="220.0" width="1" height="1" fill="#b8ac86" opacity="0.5"/>
<rect x="486.68" y="220.0" width="1" height="1" fill="#b8ac86" opacity="0.5"/>
<rect x="489.16" y="220.0" width="1" height="1" fill="#b8ac86" opacity="0.5"/>
<rect x="491.64" y="220.0" width="1" height="1" fill="#b8ac86" opacity="0.5"/>
<rect x="494.12" y="220.0" width="1" height="1" fill="#b8ac86" opacity="0.5"/>
<rect x="499.08" y="220.0" width="1" height="1" fill="#b8ac86" opacity="0.5"/>
<rect x="501.56" y="220.0" width="1" height="1" fill="#b8ac86" opacity="0.5"/>
<rect x="504.04" y="220.0" width="1" height="1" fill="#b8ac86" opacity="0.5"/>
<rect x="506.52" y="220.0" width="1" height="1" fill="#b8ac86" opacity="0.5"/>
<rect x="511.48" y="220.0" width="1" height="1" fill="#b8ac86" opacity="0.5"/>
<rect x="513.96" y="220.0" width="1" height="1" fill="#b8ac86" opacity="0.5"/>
<rect x="516.44" y="220.0" width="1" height="1" fill="#b8ac86" opacity="0.5"/>
<rect x="518.92" y="220.0" width="1" height="1" fill="#b8ac86" opacity="0.5"/>
<rect x="523.88" y="220.0" width="1" height="1" fill="#b8ac86" opacity="0.5"/>
<rect x="526.36" y="220.0" width="1" height="1" fill="#b8ac86" opacity="0.5"/>
<rect x="528.84" y="220.0" width="1" height="1" fill="#b8ac86" opacity="0.5"/>
<rect x="531.32" y="220.0" width="1" height="1" fill="#b8ac86" opacity="0.5"/>
<rect x="536.28" y="220.0" width="1" height="1" fill="#b8ac86" opacity="0.5"/>
<rect x="538.76" y="220.0" width="1" height="1" fill="#b8ac86" opacity="0.5"/>
<rect x="541.24" y="220.0" width="1" height="1" fill="#b8ac86" opacity="0.5"/>
<rect x="543.72" y="220.0" width="1" height="1" fill="#b8ac86" opacity="0.5"/>
<rect x="548.68" y="220.0" width="1" height="1" fill="#b8ac86" opacity="0.5"/>
<rect x="551.16" y="220.0" width="1" height="1" fill="#b8ac86" opacity="0.5"/>
<rect x="553.64" y="220.0" width="1" height="1" fill="#b8ac86" opacity="0.5"/>
<rect x="556.12" y="220.0" width="1" height="1" fill="#b8ac86" opacity="0.5"/>
<rect x="561.08" y="220.0" width="1" height="1" fill="#b8ac86" opacity="0.5"/>
<rect x="563.56" y="220.0" width="1" height="1" fill="#b8ac86" opacity="0.5"/>
<rect x="566.04" y="220.0" width="1" height="1" fill="#b8ac86" opacity="0.5"/>
<rect x="568.52" y="220.0" width="1" height="1" fill="#b8ac86" opacity="0.5"/>
<rect x="573.48" y="220.0" width="1" height="1" fill="#b8ac86" opacity="0.5"/>
<rect x="575.96" y="220.0" width="1" height="1" fill="#b8ac86" opacity="0.5"/>
<rect x="578.44" y="220.0" width="1" height="1" fill="#b8ac86" opacity="0.5"/>
<rect x="580.92" y="220.0" width="1" height="1" fill="#b8ac86" opacity="0.5"/>
<rect x="585.88" y="220.0" width="1" height="1" fill="#b8ac86" opacity="0.5"/>
<rect x="588.36" y="220.0" width="1" height="1" fill="#b8ac86" opacity="0.5"/>
<rect x="590.84" y="220.0" width="1" height="1" fill="#b8ac86" opacity="0.5"/>
<rect x="593.32" y="220.0" width="1" height="1" fill="#b8ac86" opacity="0.5"/>
<rect x="598.28" y="220.0" width="1" height="1" fill="#b8ac86" opacity="0.5"/>
<rect x="600.76" y="220.0" width="1" height="1" fill="#b8ac86" opacity="0.5"/>
<rect x="603.24" y="220.0" width="1" height="1" fill="#b8ac86" opacity="0.5"/>
<rect x="605.72" y="220.0" width="1" height="1" fill="#b8ac86" opacity="0.5"/>
<rect x="610.68" y="220.0" width="1" height="1" fill="#b8ac86" opacity="0.5"/>
<rect x="613.16" y="220.0" width="1" height="1" fill="#b8ac86" opacity="0.5"/>
<rect x="615.64" y="220.0" width="1" height="1" fill="#b8ac86" opacity="0.5"/>
<rect x="618.12" y="220.0" width="1" height="1" fill="#b8ac86" opacity="0.5"/>
<rect x="623.08" y="220.0" width="1" height="1" fill="#b8ac86" opacity="0.5"/>
<rect x="625.56" y="220.0" width="1" height="1" fill="#b8ac86" opacity="0.5"/>
<rect x="628.04" y="220.0" width="1" height="1" fill="#b8ac86" opacity="0.5"/>
<rect x="630.52" y="220.0" width="1" height="1" fill="#b8ac86" opacity="0.5"/>
<rect x="323.0" y="35.86" width="1" height="1" fill="#b8ac86" opacity="0.5"/>
<rect x="323.0" y="37.72" width="1" height="1" fill="#b8ac86" opacity="0.5"/>
<rect x="323.0" y="39.58" width="1" height="1" fill="#b8ac86" opacity="0.5"/>
<rect x="323.0" y="41.44" width="1" height="1" fill="#b8ac86" opacity="0.5"/>
<rect x="323.0" y="45.16" width="1" height="1" fill="#b8ac86" opacity="0.5"/>
<rect x="323.0" y="47.02" width="1" height="1" fill="#b8ac86" opacity="0.5"/>
<rect x="323.0" y="48.88" width="1" height="1" fill="#b8ac86" opacity="0.5"/>
<rect x="323.0" y="50.74" width="1" height="1" fill="#b8ac86" opacity="0.5"/>
<rect x="323.0" y="54.46" width="1" height="1" fill="#b8ac86" opacity="0.5"/>
<rect x="323.0" y="56.32" width="1" height="1" fill="#b8ac86" opacity="0.5"/>
<rect x="323.0" y="58.18" width="1" height="1" fill="#b8ac86" opacity="0.5"/>
<rect x="323.0" y="60.04" width="1" height="1" fill="#b8ac86" opacity="0.5"/>
<rect x="323.0" y="63.76" width="1" height="1" fill="#b8ac86" opacity="0.5"/>
<rect x="323.0" y="65.62" width="1" height="1" fill="#b8ac86" opacity="0.5"/>
<rect x="323.0" y="67.48" width="1" height="1" fill="#b8ac86" opacity="0.5"/>
<rect x="323.0" y="69.34" width="1" height="1" fill="#b8ac86" opacity="0.5"/>
<rect x="323.0" y="73.06" width="1" height="1" fill="#b8ac86" opacity="0.5"/>
<rect x="323.0" y="74.92" width="1" height="1" fill="#b8ac86" opacity="0.5"/>
<rect x="323.0" y="76.78" width="1" height="1" fill="#b8ac86" opacity="0.5"/>
<rect x="323.0" y="78.64" width="1" height="1" fill="#b8ac86" opacity="0.5"/>
<rect x="323.0" y="82.36" width="1" height="1" fill="#b8ac86" opacity="0.5"/>
<rect x="323.0" y="84.22" width="1" height="1" fill="#b8ac86" opacity="0.5"/>
<rect x="323.0" y="86.08" width="1" height="1" fill="#b8ac86" opacity="0.5"/>
<rect x="323.0" y="87.94" width="1" height="1" fill="#b8ac86" opacity="0.5"/>
<rect x="323.0" y="91.66" width="1" height="1" fill="#b8ac86" opacity="0.5"/>
<rect x="323.0" y="93.52" width="1" height="1" fill="#b8ac86" opacity="0.5"/>
<rect x="323.0" y="95.38" width="1" height="1" fill="#b8ac86" opacity="0.5"/>
<rect x="323.0" y="97.24" width="1" height="1" fill="#b8ac86" opacity="0.5"/>
<rect x="323.0" y="100.96" width="1" height="1" fill="#b8ac86" opacity="0.5"/>
<rect x="323.0" y="102.82" width="1" height="1" fill="#b8ac86" opacity="0.5"/>
<rect x="323.0" y="104.68" width="1" height="1" fill="#b8ac86" opacity="0.5"/>
<rect x="323.0" y="106.54" width="1" height="1" fill="#b8ac86" opacity="0.5"/>
<rect x="323.0" y="110.26" width="1" height="1" fill="#b8ac86" opacity="0.5"/>
<rect x="323.0" y="112.12" width="1" height="1" fill="#b8ac86" opacity="0.5"/>
<rect x="323.0" y="113.98" width="1" height="1" fill="#b8ac86" opacity="0.5"/>
<rect x="323.0" y="115.84" width="1" height="1" fill="#b8ac86" opacity="0.5"/>
<rect x="323.0" y="119.56" width="1" height="1" fill="#b8ac86" opacity="0.5"/>
<rect x="323.0" y="121.42" width="1" height="1" fill="#b8ac86" opacity="0.5"/>
<rect x="323.0" y="123.28" width="1" height="1" fill="#b8ac86" opacity="0.5"/>
<rect x="323.0" y="125.14" width="1" height="1" fill="#b8ac86" opacity="0.5"/>
<rect x="323.0" y="128.86" width="1" height="1" fill="#b8ac86" opacity="0.5"/>
<rect x="323.0" y="130.72" width="1" height="1" fill="#b8ac86" opacity="0.5"/>
<rect x="323.0" y="132.58" width="1" height="1" fill="#b8ac86" opacity="0.5"/>
<rect x="323.0" y="134.44" width="1" height="1" fill="#b8ac86" opacity="0.5"/>
<rect x="323.0" y="138.16" width="1" height="1" fill="#b8ac86" opacity="0.5"/>
<rect x="323.0" y="140.02" width="1" height="1" fill="#b8ac86" opacity="0.5"/>
<rect x="323.0" y="141.88" width="1" height="1" fill="#b8ac86" opacity="0.5"/>
<rect x="323.0" y="143.74" width="1" height="1" fill="#b8ac86" opacity="0.5"/>
<rect x="323.0" y="147.46" width="1" height="1" fill="#b8ac86" opacity="0.5"/>
<rect x="323.0" y="149.32" width="1" height="1" fill="#b8ac86" opacity="0.5"/>
<rect x="323.0" y="151.18" width="1" height="1" fill="#b8ac86" opacity="0.5"/>
<rect x="323.0" y="153.04" width="1" height="1" fill="#b8ac86" opacity="0.5"/>
<rect x="323.0" y="156.76" width="1" height="1" fill="#b8ac86" opacity="0.5"/>
<rect x="323.0" y="158.62" width="1" height="1" fill="#b8ac86" opacity="0.5"/>
<rect x="323.0" y="160.48" width="1" height="1" fill="#b8ac86" opacity="0.5"/>
<rect x="323.0" y="162.34" width="1" height="1" fill="#b8ac86" opacity="0.5"/>
<rect x="323.0" y="166.06" width="1" height="1" fill="#b8ac86" opacity="0.5"/>
<rect x="323.0" y="167.92" width="1" height="1" fill="#b8ac86" opacity="0.5"/>
<rect x="323.0" y="169.78" width="1" height="1" fill="#b8ac86" opacity="0.5"/>
<rect x="323.0" y="171.64" width="1" height="1" fill="#b8ac86" opacity="0.5"/>
<rect x="323.0" y="175.36" width="1" height="1" fill="#b8ac86" opacity="0.5"/>
<rect x="323.0" y="177.22" width="1" height="1" fill="#b8ac86" opacity="0.5"/>
<rect x="323.0" y="179.08" width="1" height="1" fill="#b8ac86" opacity="0.5"/>
<rect x="323.0" y="180.94" width="1" height="1" fill="#b8ac86" opacity="0.5"/>
<rect x="323.0" y="184.66" width="1" height="1" fill="#b8ac86" opacity="0.5"/>
<rect x="323.0" y="186.52" width="1" height="1" fill="#b8ac86" opacity="0.5"/>
<rect x="323.0" y="188.38" width="1" height="1" fill="#b8ac86" opacity="0.5"/>
<rect x="323.0" y="190.24" width="1" height="1" fill="#b8ac86" opacity="0.5"/>
<rect x="323.0" y="193.96" width="1" height="1" fill="#b8ac86" opacity="0.5"/>
<rect x="323.0" y="195.82" width="1" height="1" fill="#b8ac86" opacity="0.5"/>
<rect x="323.0" y="197.68" width="1" height="1" fill="#b8ac86" opacity="0.5"/>
<rect x="323.0" y="199.54" width="1" height="1" fill="#b8ac86" opacity="0.5"/>
<rect x="323.0" y="203.26" width="1" height="1" fill="#b8ac86" opacity="0.5"/>
<rect x="323.0" y="205.12" width="1" height="1" fill="#b8ac86" opacity="0.5"/>
<rect x="323.0" y="206.98" width="1" height="1" fill="#b8ac86" opacity="0.5"/>
<rect x="323.0" y="208.84" width="1" height="1" fill="#b8ac86" opacity="0.5"/>
<rect x="323.0" y="212.56" width="1" height="1" fill="#b8ac86" opacity="0.5"/>
<rect x="323.0" y="214.42" width="1" height="1" fill="#b8ac86" opacity="0.5"/>
<rect x="323.0" y="216.28" width="1" height="1" fill="#b8ac86" opacity="0.5"/>
<rect x="323.0" y="218.14" width="1" height="1" fill="#b8ac86" opacity="0.5"/>
<rect x="323.0" y="221.86" width="1" height="1" fill="#b8ac86" opacity="0.5"/>
<rect x="323.0" y="223.72" width="1" height="1" fill="#b8ac86" opacity="0.5"/>
<rect x="323.0" y="225.58" width="1" height="1" fill="#b8ac86" opacity="0.5"/>
<rect x="323.0" y="227.44" width="1" height="1" fill="#b8ac86" opacity="0.5"/>
<rect x="323.0" y="231.16" width="1" height="1" fill="#b8ac86" opacity="0.5"/>
<rect x="323.0" y="233.02" width="1" height="1" fill="#b8ac86" opacity="0.5"/>
<rect x="323.0" y="234.88" width="1" height="1" fill="#b8ac86" opacity="0.5"/>
<rect x="323.0" y="236.74" width="1" height="1" fill="#b8ac86" opacity="0.5"/>
<rect x="323.0" y="240.46" width="1" height="1" fill="#b8ac86" opacity="0.5"/>
<rect x="323.0" y="242.32" width="1" height="1" fill="#b8ac86" opacity="0.5"/>
<rect x="323.0" y="244.18" width="1" height="1" fill="#b8ac86" opacity="0.5"/>
<rect x="323.0" y="246.04" width="1" height="1" fill="#b8ac86" opacity="0.5"/>
<rect x="323.0" y="249.76" width="1" height="1" fill="#b8ac86" opacity="0.5"/>
<rect x="323.0" y="251.62" width="1" height="1" fill="#b8ac86" opacity="0.5"/>
<rect x="323.0" y="253.48" width="1" height="1" fill="#b8ac86" opacity="0.5"/>
<rect x="323.0" y="255.34" width="1" height="1" fill="#b8ac86" opacity="0.5"/>
<rect x="323.0" y="259.06" width="1" height="1" fill="#b8ac86" opacity="0.5"/>
<rect x="323.0" y="260.92" width="1" height="1" fill="#b8ac86" opacity="0.5"/>
<rect x="323.0" y="262.78" width="1" height="1" fill="#b8ac86" opacity="0.5"/>
<rect x="323.0" y="264.64" width="1" height="1" fill="#b8ac86" opacity="0.5"/>
<rect x="323.0" y="268.36" width="1" height="1" fill="#b8ac86" opacity="0.5"/>
<rect x="323.0" y="270.22" width="1" height="1" fill="#b8ac86" opacity="0.5"/>
<rect x="323.0" y="272.08" width="1" height="1" fill="#b8ac86" opacity="0.5"/>
<rect x="323.0" y="273.94" width="1" height="1" fill="#b8ac86" opacity="0.5"/>
<rect x="323.0" y="277.66" width="1" height="1" fill="#b8ac86" opacity="0.5"/>
<rect x="323.0" y="279.52" width="1" height="1" fill="#b8ac86" opacity="0.5"/>
<rect x="323.0" y="281.38" width="1" height="1" fill="#b8ac86" opacity="0.5"/>
<rect x="323.0" y="283.24" width="1" height="1" fill="#b8ac86" opacity="0.5"/>
<rect x="323.0" y="286.96" width="1" height="1" fill="#b8ac86" opacity="0.5"/>
<rect x="323.0" y="288.82" width="1" height="1" fill="#b8ac86" opacity="0.5"/>
<rect x="323.0" y="290.68" width="1" height="1" fill="#b8ac86" opacity="0.5"/>
<rect x="323.0" y="292.54" width="1" height="1" fill="#b8ac86" opacity="0.5"/>
<rect x="323.0" y="296.26" width="1" height="1" fill="#b8ac86" opacity="0.5"/>
<rect x="323.0" y="298.12" width="1" height="1" fill="#b8ac86" opacity="0.5"/>
<rect x="323.0" y="299.98" width="1" height="1" fill="#b8ac86" opacity="0.5"/>
<rect x="323.0" y="301.84" width="1" height="1" fill="#b8ac86" opacity="0.5"/>
<rect x="323.0" y="305.56" width="1" height="1" fill="#b8ac86" opacity="0.5"/>
<rect x="323.0" y="307.42" width="1" height="1" fill="#b8ac86" opacity="0.5"/>
<rect x="323.0" y="309.28" width="1" height="1" fill="#b8ac86" opacity="0.5"/>
<rect x="323.0" y="311.14" width="1" height="1" fill="#b8ac86" opacity="0.5"/>
<rect x="323.0" y="314.86" width="1" height="1" fill="#b8ac86" opacity="0.5"/>
<rect x="323.0" y="316.72" width="1" height="1" fill="#b8ac86" opacity="0.5"/>
<rect x="323.0" y="318.58" width="1" height="1" fill="#b8ac86" opacity="0.5"/>
<rect x="323.0" y="320.44" width="1" height="1" fill="#b8ac86" opacity="0.5"/>
<rect x="323.0" y="324.16" width="1" height="1" fill="#b8ac86" opacity="0.5"/>
<rect x="323.0" y="326.02" width="1" height="1" fill="#b8ac86" opacity="0.5"/>
<rect x="323.0" y="327.88" width="1" height="1" fill="#b8ac86" opacity="0.5"/>
<rect x="323.0" y="329.74" width="1" height="1" fill="#b8ac86" opacity="0.5"/>
<rect x="323.0" y="333.46" width="1" height="1" fill="#b8ac86" opacity="0.5"/>
<rect x="323.0" y="335.32" width="1" height="1" fill="#b8ac86" opacity="0.5"/>
<rect x="323.0" y="337.18" width="1" height="1" fill="#b8ac86" opacity="0.5"/>
<rect x="323.0" y="339.04" width="1" height="1" fill="#b8ac86" opacity="0.5"/>
<rect x="323.0" y="342.76" width="1" height="1" fill="#b8ac86" opacity="0.5"/>
<rect x="323.0" y="344.62" width="1" height="1" fill="#b8ac86" opacity="0.5"/>
<rect x="323.0" y="346.48" width="1" height="1" fill="#b8ac86" opacity="0.5"/>
<rect x="323.0" y="348.34" width="1" height="1" fill="#b8ac86" opacity="0.5"/>
<rect x="323.0" y="352.06" width="1" height="1" fill="#b8ac86" opacity="0.5"/>
<rect x="323.0" y="353.92" width="1" height="1" fill="#b8ac86" opacity="0.5"/>
<rect x="323.0" y="355.78" width="1" height="1" fill="#b8ac86" opacity="0.5"/>
<rect x="323.0" y="357.64" width="1" height="1" fill="#b8ac86" opacity="0.5"/>
<rect x="323.0" y="361.36" width="1" height="1" fill="#b8ac86" opacity="0.5"/>
<rect x="323.0" y="363.22" width="1" height="1" fill="#b8ac86" opacity="0.5"/>
<rect x="323.0" y="365.08" width="1" height="1" fill="#b8ac86" opacity="0.5"/>
<rect x="323.0" y="366.94" width="1" height="1" fill="#b8ac86" opacity="0.5"/>
<rect x="323.0" y="370.66" width="1" height="1" fill="#b8ac86" opacity="0.5"/>
<rect x="323.0" y="372.52" width="1" height="1" fill="#b8ac86" opacity="0.5"/>
<rect x="323.0" y="374.38" width="1" height="1" fill="#b8ac86" opacity="0.5"/>
<rect x="323.0" y="376.24" width="1" height="1" fill="#b8ac86" opacity="0.5"/>
<rect x="323.0" y="379.96" width="1" height="1" fill="#b8ac86" opacity="0.5"/>
<rect x="323.0" y="381.82" width="1" height="1" fill="#b8ac86" opacity="0.5"/>
<rect x="323.0" y="383.68" width="1" height="1" fill="#b8ac86" opacity="0.5"/>
<rect x="323.0" y="385.54" width="1" height="1" fill="#b8ac86" opacity="0.5"/>
<rect x="323.0" y="389.26" width="1" height="1" fill="#b8ac86" opacity="0.5"/>
<rect x="323.0" y="391.12" width="1" height="1" fill="#b8ac86" opacity="0.5"/>
<rect x="323.0" y="392.98" width="1" height="1" fill="#b8ac86" opacity="0.5"/>
<rect x="323.0" y="394.84" width="1" height="1" fill="#b8ac86" opacity="0.5"/>
<rect x="323.0" y="398.56" width="1" height="1" fill="#b8ac86" opacity="0.5"/>
<rect x="323.0" y="400.42" width="1" height="1" fill="#b8ac86" opacity="0.5"/>
<rect x="323.0" y="402.28" width="1" height="1" fill="#b8ac86" opacity="0.5"/>
<rect x="323.0" y="404.14" width="1" height="1" fill="#b8ac86" opacity="0.5"/>
<rect x="25" y="217.0" width="1" height="7" fill="#b8ac86" opacity="0.6"/><rect x="25" y="219.0" width="1" height="3" fill="#b8ac86" opacity="0.3"/>
<rect x="38" y="217.0" width="1" height="7" fill="#b8ac86" opacity="0.6"/><rect x="38" y="219.0" width="1" height="3" fill="#b8ac86" opacity="0.3"/>
<rect x="50" y="217.0" width="1" height="7" fill="#b8ac86" opacity="0.6"/><rect x="50" y="219.0" width="1" height="3" fill="#b8ac86" opacity="0.3"/>
<rect x="63" y="217.0" width="1" height="7" fill="#b8ac86" opacity="0.6"/><rect x="63" y="219.0" width="1" height="3" fill="#b8ac86" opacity="0.3"/>
<rect x="75" y="215.0" width="1" height="11" fill="#b8ac86" opacity="0.75"/>
<rect x="87" y="217.0" width="1" height="7" fill="#b8ac86" opacity="0.6"/><rect x="87" y="219.0" width="1" height="3" fill="#b8ac86" opacity="0.3"/>
<rect x="100" y="217.0" width="1" height="7" fill="#b8ac86" opacity="0.6"/><rect x="100" y="219.0" width="1" height="3" fill="#b8ac86" opacity="0.3"/>
<rect x="112" y="217.0" width="1" height="7" fill="#b8ac86" opacity="0.6"/><rect x="112" y="219.0" width="1" height="3" fill="#b8ac86" opacity="0.3"/>
<rect x="125" y="217.0" width="1" height="7" fill="#b8ac86" opacity="0.6"/><rect x="125" y="219.0" width="1" height="3" fill="#b8ac86" opacity="0.3"/>
<rect x="137" y="215.0" width="1" height="11" fill="#b8ac86" opacity="0.75"/>
<rect x="149" y="217.0" width="1" height="7" fill="#b8ac86" opacity="0.6"/><rect x="149" y="219.0" width="1" height="3" fill="#b8ac86" opacity="0.3"/>
<rect x="162" y="217.0" width="1" height="7" fill="#b8ac86" opacity="0.6"/><rect x="162" y="219.0" width="1" height="3" fill="#b8ac86" opacity="0.3"/>
<rect x="174" y="217.0" width="1" height="7" fill="#b8ac86" opacity="0.6"/><rect x="174" y="219.0" width="1" height="3" fill="#b8ac86" opacity="0.3"/>
<rect x="187" y="217.0" width="1" height="7" fill="#b8ac86" opacity="0.6"/><rect x="187" y="219.0" width="1" height="3" fill="#b8ac86" opacity="0.3"/>
<rect x="199" y="215.0" width="1" height="11" fill="#b8ac86" opacity="0.75"/>
<rect x="211" y="217.0" width="1" height="7" fill="#b8ac86" opacity="0.6"/><rect x="211" y="219.0" width="1" height="3" fill="#b8ac86" opacity="0.3"/>
<rect x="224" y="217.0" width="1" height="7" fill="#b8ac86" opacity="0.6"/><rect x="224" y="219.0" width="1" height="3" fill="#b8ac86" opacity="0.3"/>
<rect x="236" y="217.0" width="1" height="7" fill="#b8ac86" opacity="0.6"/><rect x="236" y="219.0" width="1" height="3" fill="#b8ac86" opacity="0.3"/>
<rect x="249" y="217.0" width="1" height="7" fill="#b8ac86" opacity="0.6"/><rect x="249" y="219.0" width="1" height="3" fill="#b8ac86" opacity="0.3"/>
<rect x="261" y="215.0" width="1" height="11" fill="#b8ac86" opacity="0.75"/>
<rect x="273" y="217.0" width="1" height="7" fill="#b8ac86" opacity="0.6"/><rect x="273" y="219.0" width="1" height="3" fill="#b8ac86" opacity="0.3"/>
<rect x="286" y="217.0" width="1" height="7" fill="#b8ac86" opacity="0.6"/><rect x="286" y="219.0" width="1" height="3" fill="#b8ac86" opacity="0.3"/>
<rect x="298" y="217.0" width="1" height="7" fill="#b8ac86" opacity="0.6"/><rect x="298" y="219.0" width="1" height="3" fill="#b8ac86" opacity="0.3"/>
<rect x="311" y="217.0" width="1" height="7" fill="#b8ac86" opacity="0.6"/><rect x="311" y="219.0" width="1" height="3" fill="#b8ac86" opacity="0.3"/>
<rect x="335" y="217.0" width="1" height="7" fill="#b8ac86" opacity="0.6"/><rect x="335" y="219.0" width="1" height="3" fill="#b8ac86" opacity="0.3"/>
<rect x="348" y="217.0" width="1" height="7" fill="#b8ac86" opacity="0.6"/><rect x="348" y="219.0" width="1" height="3" fill="#b8ac86" opacity="0.3"/>
<rect x="360" y="217.0" width="1" height="7" fill="#b8ac86" opacity="0.6"/><rect x="360" y="219.0" width="1" height="3" fill="#b8ac86" opacity="0.3"/>
<rect x="373" y="217.0" width="1" height="7" fill="#b8ac86" opacity="0.6"/><rect x="373" y="219.0" width="1" height="3" fill="#b8ac86" opacity="0.3"/>
<rect x="385" y="215.0" width="1" height="11" fill="#b8ac86" opacity="0.75"/>
<rect x="397" y="217.0" width="1" height="7" fill="#b8ac86" opacity="0.6"/><rect x="397" y="219.0" width="1" height="3" fill="#b8ac86" opacity="0.3"/>
<rect x="410" y="217.0" width="1" height="7" fill="#b8ac86" opacity="0.6"/><rect x="410" y="219.0" width="1" height="3" fill="#b8ac86" opacity="0.3"/>
<rect x="422" y="217.0" width="1" height="7" fill="#b8ac86" opacity="0.6"/><rect x="422" y="219.0" width="1" height="3" fill="#b8ac86" opacity="0.3"/>
<rect x="435" y="217.0" width="1" height="7" fill="#b8ac86" opacity="0.6"/><rect x="435" y="219.0" width="1" height="3" fill="#b8ac86" opacity="0.3"/>
<rect x="447" y="215.0" width="1" height="11" fill="#b8ac86" opacity="0.75"/>
<rect x="459" y="217.0" width="1" height="7" fill="#b8ac86" opacity="0.6"/><rect x="459" y="219.0" width="1" height="3" fill="#b8ac86" opacity="0.3"/>
<rect x="472" y="217.0" width="1" height="7" fill="#b8ac86" opacity="0.6"/><rect x="472" y="219.0" width="1" height="3" fill="#b8ac86" opacity="0.3"/>
<rect x="484" y="217.0" width="1" height="7" fill="#b8ac86" opacity="0.6"/><rect x="484" y="219.0" width="1" height="3" fill="#b8ac86" opacity="0.3"/>
<rect x="497" y="217.0" width="1" height="7" fill="#b8ac86" opacity="0.6"/><rect x="497" y="219.0" width="1" height="3" fill="#b8ac86" opacity="0.3"/>
<rect x="509" y="215.0" width="1" height="11" fill="#b8ac86" opacity="0.75"/>
<rect x="521" y="217.0" width="1" height="7" fill="#b8ac86" opacity="0.6"/><rect x="521" y="219.0" width="1" height="3" fill="#b8ac86" opacity="0.3"/>
<rect x="534" y="217.0" width="1" height="7" fill="#b8ac86" opacity="0.6"/><rect x="534" y="219.0" width="1" height="3" fill="#b8ac86" opacity="0.3"/>
<rect x="546" y="217.0" width="1" height="7" fill="#b8ac86" opacity="0.6"/><rect x="546" y="219.0" width="1" height="3" fill="#b8ac86" opacity="0.3"/>
<rect x="559" y="217.0" width="1" height="7" fill="#b8ac86" opacity="0.6"/><rect x="559" y="219.0" width="1" height="3" fill="#b8ac86" opacity="0.3"/>
<rect x="571" y="215.0" width="1" height="11" fill="#b8ac86" opacity="0.75"/>
<rect x="583" y="217.0" width="1" height="7" fill="#b8ac86" opacity="0.6"/><rect x="583" y="219.0" width="1" height="3" fill="#b8ac86" opacity="0.3"/>
<rect x="596" y="217.0" width="1" height="7" fill="#b8ac86" opacity="0.6"/><rect x="596" y="219.0" width="1" height="3" fill="#b8ac86" opacity="0.3"/>
<rect x="608" y="217.0" width="1" height="7" fill="#b8ac86" opacity="0.6"/><rect x="608" y="219.0" width="1" height="3" fill="#b8ac86" opacity="0.3"/>
<rect x="621" y="217.0" width="1" height="7" fill="#b8ac86" opacity="0.6"/><rect x="621" y="219.0" width="1" height="3" fill="#b8ac86" opacity="0.3"/>
<rect x="319.0" y="43" width="9" height="1" fill="#b8ac86" opacity="0.6"/><rect x="322.0" y="43" width="3" height="1" fill="#b8ac86" opacity="0.3"/>
<rect x="319.0" y="53" width="9" height="1" fill="#b8ac86" opacity="0.6"/><rect x="322.0" y="53" width="3" height="1" fill="#b8ac86" opacity="0.3"/>
<rect x="319.0" y="62" width="9" height="1" fill="#b8ac86" opacity="0.6"/><rect x="322.0" y="62" width="3" height="1" fill="#b8ac86" opacity="0.3"/>
<rect x="319.0" y="71" width="9" height="1" fill="#b8ac86" opacity="0.6"/><rect x="322.0" y="71" width="3" height="1" fill="#b8ac86" opacity="0.3"/>
<rect x="318.0" y="81" width="11" height="1" fill="#b8ac86" opacity="0.75"/>
<rect x="319.0" y="90" width="9" height="1" fill="#b8ac86" opacity="0.6"/><rect x="322.0" y="90" width="3" height="1" fill="#b8ac86" opacity="0.3"/>
<rect x="319.0" y="99" width="9" height="1" fill="#b8ac86" opacity="0.6"/><rect x="322.0" y="99" width="3" height="1" fill="#b8ac86" opacity="0.3"/>
<rect x="319.0" y="108" width="9" height="1" fill="#b8ac86" opacity="0.6"/><rect x="322.0" y="108" width="3" height="1" fill="#b8ac86" opacity="0.3"/>
<rect x="319.0" y="118" width="9" height="1" fill="#b8ac86" opacity="0.6"/><rect x="322.0" y="118" width="3" height="1" fill="#b8ac86" opacity="0.3"/>
<rect x="318.0" y="127" width="11" height="1" fill="#b8ac86" opacity="0.75"/>
<rect x="319.0" y="136" width="9" height="1" fill="#b8ac86" opacity="0.6"/><rect x="322.0" y="136" width="3" height="1" fill="#b8ac86" opacity="0.3"/>
<rect x="319.0" y="146" width="9" height="1" fill="#b8ac86" opacity="0.6"/><rect x="322.0" y="146" width="3" height="1" fill="#b8ac86" opacity="0.3"/>
<rect x="319.0" y="155" width="9" height="1" fill="#b8ac86" opacity="0.6"/><rect x="322.0" y="155" width="3" height="1" fill="#b8ac86" opacity="0.3"/>
<rect x="319.0" y="164" width="9" height="1" fill="#b8ac86" opacity="0.6"/><rect x="322.0" y="164" width="3" height="1" fill="#b8ac86" opacity="0.3"/>
<rect x="318.0" y="174" width="11" height="1" fill="#b8ac86" opacity="0.75"/>
<rect x="319.0" y="183" width="9" height="1" fill="#b8ac86" opacity="0.6"/><rect x="322.0" y="183" width="3" height="1" fill="#b8ac86" opacity="0.3"/>
<rect x="319.0" y="192" width="9" height="1" fill="#b8ac86" opacity="0.6"/><rect x="322.0" y="192" width="3" height="1" fill="#b8ac86" opacity="0.3"/>
<rect x="319.0" y="201" width="9" height="1" fill="#b8ac86" opacity="0.6"/><rect x="322.0" y="201" width="3" height="1" fill="#b8ac86" opacity="0.3"/>
<rect x="319.0" y="211" width="9" height="1" fill="#b8ac86" opacity="0.6"/><rect x="322.0" y="211" width="3" height="1" fill="#b8ac86" opacity="0.3"/>
<rect x="319.0" y="229" width="9" height="1" fill="#b8ac86" opacity="0.6"/><rect x="322.0" y="229" width="3" height="1" fill="#b8ac86" opacity="0.3"/>
<rect x="319.0" y="239" width="9" height="1" fill="#b8ac86" opacity="0.6"/><rect x="322.0" y="239" width="3" height="1" fill="#b8ac86" opacity="0.3"/>
<rect x="319.0" y="248" width="9" height="1" fill="#b8ac86" opacity="0.6"/><rect x="322.0" y="248" width="3" height="1" fill="#b8ac86" opacity="0.3"/>
<rect x="319.0" y="257" width="9" height="1" fill="#b8ac86" opacity="0.6"/><rect x="322.0" y="257" width="3" height="1" fill="#b8ac86" opacity="0.3"/>
<rect x="318.0" y="267" width="11" height="1" fill="#b8ac86" opacity="0.75"/>
<rect x="319.0" y="276" width="9" height="1" fill="#b8ac86" opacity="0.6"/><rect x="322.0" y="276" width="3" height="1" fill="#b8ac86" opacity="0.3"/>
<rect x="319.0" y="285" width="9" height="1" fill="#b8ac86" opacity="0.6"/><rect x="322.0" y="285" width="3" height="1" fill="#b8ac86" opacity="0.3"/>
<rect x="319.0" y="294" width="9" height="1" fill="#b8ac86" opacity="0.6"/><rect x="322.0" y="294" width="3" height="1" fill="#b8ac86" opacity="0.3"/>
<rect x="319.0" y="304" width="9" height="1" fill="#b8ac86" opacity="0.6"/><rect x="322.0" y="304" width="3" height="1" fill="#b8ac86" opacity="0.3"/>
<rect x="318.0" y="313" width="11" height="1" fill="#b8ac86" opacity="0.75"/>
<rect x="319.0" y="322" width="9" height="1" fill="#b8ac86" opacity="0.6"/><rect x="322.0" y="322" width="3" height="1" fill="#b8ac86" opacity="0.3"/>
<rect x="319.0" y="332" width="9" height="1" fill="#b8ac86" opacity="0.6"/><rect x="322.0" y="332" width="3" height="1" fill="#b8ac86" opacity="0.3"/>
<rect x="319.0" y="341" width="9" height="1" fill="#b8ac86" opacity="0.6"/><rect x="322.0" y="341" width="3" height="1" fill="#b8ac86" opacity="0.3"/>
<rect x="319.0" y="350" width="9" height="1" fill="#b8ac86" opacity="0.6"/><rect x="322.0" y="350" width="3" height="1" fill="#b8ac86" opacity="0.3"/>
<rect x="318.0" y="360" width="11" height="1" fill="#b8ac86" opacity="0.75"/>
<rect x="319.0" y="369" width="9" height="1" fill="#b8ac86" opacity="0.6"/><rect x="322.0" y="369" width="3" height="1" fill="#b8ac86" opacity="0.3"/>
<rect x="319.0" y="378" width="9" height="1" fill="#b8ac86" opacity="0.6"/><rect x="322.0" y="378" width="3" height="1" fill="#b8ac86" opacity="0.3"/>
<rect x="319.0" y="387" width="9" height="1" fill="#b8ac86" opacity="0.6"/><rect x="322.0" y="387" width="3" height="1" fill="#b8ac86" opacity="0.3"/>
<rect x="319.0" y="397" width="9" height="1" fill="#b8ac86" opacity="0.6"/><rect x="322.0" y="397" width="3" height="1" fill="#b8ac86" opacity="0.3"/>
<rect x="315.0" y="220.0" width="17" height="1" fill="#b8ac86"/>
<rect x="323.0" y="214.0" width="1" height="13" fill="#b8ac86"/>
</svg>
<svg width="635" height="480" viewBox="0 0 635 480">
<path d="M316.5,36 L331.5,36 Q327.5,37.5 324,42.5 Q320.5,37.5 316.5,36 Z" fill="#f28a12"/>
<rect x="323.2" y="36" width="1.6" height="4.5" fill="#48c8b8"/>
<polyline points="14.62,131.30 15.00,134.00 15.39,137.11 15.79,140.50 16.20,144.00 16.63,147.59 17.06,151.30 17.50,155.00 17.93,158.67 18.37,162.33 18.80,166.00 19.22,169.67 19.64,173.33 20.10,177.00 20.60,180.74 21.13,184.48 21.70,188.00 22.30,191.22 22.93,194.22 23.60,197.00 24.30,199.63 25.03,202.04 25.80,204.00 26.62,205.48 27.48,206.52 28.30,207.00 29.06,206.80 29.78,206.04 30.50,205.00 31.21,203.72 31.92,202.17 32.70,200.50 33.59,198.74 34.55,196.87 35.50,195.00 36.40,193.17 37.30,191.33 38.20,189.50 39.12,187.63 40.05,185.77 41.00,184.00 41.97,182.37 42.96,180.85 44.00,179.40 45.13,177.98 46.31,176.63 47.50,175.50 48.70,174.62 49.91,173.95 51.00,173.50 51.89,173.30 52.67,173.31 53.50,173.50 54.46,173.81 55.48,174.30 56.50,175.00 57.52,175.94 58.54,177.11 59.50,178.50 60.36,180.22 61.17,182.17 62.00,184.00 62.91,185.80 63.84,187.48 64.70,188.50 65.43,188.61 66.07,188.06 66.70,187.00 67.32,185.44 67.91,183.39 68.50,181.00 69.08,178.22 69.64,175.11 70.20,172.00 70.76,168.96 71.30,165.93 71.80,163.00 72.23,160.33 72.61,157.78 73.00,155.00 73.41,151.81 73.81,148.41 74.20,145.00 74.56,141.67 74.89,138.33 75.20,135.00 75.49,131.56 75.76,128.11 76.00,125.00 76.21,122.48 76.41,120.30 76.60,118.00 76.78,115.48 76.96,112.85 77.20,110.00 77.52,106.88 77.89,103.53 78.30,100.00 78.76,96.10 79.24,92.01 79.70,88.30 80.09,85.28 80.44,82.64 80.80,80.00 81.19,77.14 81.59,74.29 82.00,71.70 82.41,69.50 82.83,67.56 83.30,65.80 83.83,64.15 84.41,62.68 85.00,61.50 85.60,60.61 86.20,60.02 86.80,59.80 87.38,60.05 87.95,60.67 88.50,61.50 88.98,62.36 89.43,63.41 90.00,65.00 90.76,67.36 91.63,70.25 92.50,73.30 93.33,76.53 94.17,79.91 95.00,83.00 95.80,85.67 96.61,88.04 97.50,90.00 98.51,91.64 99.60,92.87 100.80,93.30 102.18,92.53 103.66,90.96 105.00,89.40 106.13,88.07 107.12,86.76 108.00,85.60 108.72,84.67 109.33,83.90 110.00,83.20 110.67,82.52 111.40,81.91 112.50,81.50 114.16,81.38 116.18,81.45 118.30,81.50 120.57,81.34 122.93,81.16 125.00,81.30 126.59,81.88 127.88,82.79 129.00,84.00 129.98,85.57 130.80,87.45 131.50,89.50 132.09,91.80 132.57,94.26 133.00,96.50 133.36,98.23 133.66,99.74 134.00,101.50 134.44,103.69 134.93,106.12 135.40,108.70 135.88,111.67 136.34,114.78 136.70,117.20 136.85,118.25 136.89,118.61 137.00,119.50 137.25,121.47 137.56,123.96 137.90,126.50 138.25,128.87 138.62,131.30 139.00,134.00 139.39,137.11 139.79,140.50 140.20,144.00 140.63,147.59 141.06,151.30 141.50,155.00 141.93,158.67 142.37,162.33 142.80,166.00 143.22,169.67 143.64,173.33 144.10,177.00 144.60,180.74 145.13,184.48 145.70,188.00 146.30,191.22 146.93,194.22 147.60,197.00 148.30,199.63 149.03,202.04 149.80,204.00 150.62,205.48 151.48,206.52 152.30,207.00 153.06,206.80 153.78,206.04 154.50,205.00 155.21,203.72 155.92,202.17 156.70,200.50 157.59,198.74 158.55,196.87 159.50,195.00 160.40,193.17 161.30,191.33 162.20,189.50 163.12,187.63 164.05,185.77 165.00,184.00 165.97,182.37 166.96,180.85 168.00,179.40 169.13,177.98 170.31,176.63 171.50,175.50 172.70,174.62 173.91,173.95 175.00,173.50 175.89,173.30 176.67,173.31 177.50,173.50 178.46,173.81 179.48,174.30 180.50,175.00 181.52,175.94 182.54,177.11 183.50,178.50 184.36,180.22 185.17,182.17 186.00,184.00 186.91,185.80 187.84,187.48 188.70,188.50 189.43,188.61 190.07,188.06 190.70,187.00 191.32,185.44 191.91,183.39 192.50,181.00 193.08,178.22 193.64,175.11 194.20,172.00 194.76,168.96 195.30,165.93 195.80,163.00 196.23,160.33 196.61,157.78 197.00,155.00 197.41,151.81 197.81,148.41 198.20,145.00 198.56,141.67 198.89,138.33 199.20,135.00 199.49,131.56 199.76,128.11 200.00,125.00 200.21,122.48 200.41,120.30 200.60,118.00 200.78,115.48 200.96,112.85 201.20,110.00 201.52,106.88 201.89,103.53 202.30,100.00 202.76,96.10 203.24,92.01 203.70,88.30 204.09,85.28 204.44,82.64 204.80,80.00 205.19,77.14 205.59,74.29 206.00,71.70 206.41,69.50 206.83,67.56 207.30,65.80 207.83,64.15 208.41,62.68 209.00,61.50 209.60,60.61 210.20,60.02 210.80,59.80 211.38,60.05 211.95,60.67 212.50,61.50 212.98,62.36 213.43,63.41 214.00,65.00 214.76,67.36 215.63,70.25 216.50,73.30 217.33,76.53 218.17,79.91 219.00,83.00 219.80,85.67 220.61,88.04 221.50,90.00 222.51,91.64 223.60,92.87 224.80,93.30 226.18,92.53 227.66,90.96 229.00,89.40 230.13,88.07 231.12,86.76 232.00,85.60 232.72,84.67 233.33,83.90 234.00,83.20 234.67,82.52 235.40,81.91 236.50,81.50 238.16,81.38 240.18,81.45 242.30,81.50 244.57,81.34 246.93,81.16 249.00,81.30 250.59,81.88 251.88,82.79 253.00,84.00 253.98,85.57 254.80,87.45 255.50,89.50 256.09,91.80 256.57,94.26 257.00,96.50 257.36,98.23 257.66,99.74 258.00,101.50 258.44,103.69 258.93,106.12 259.40,108.70 259.88,111.67 260.34,114.78 260.70,117.20 260.85,118.25 260.89,118.61 261.00,119.50 261.25,121.47 261.56,123.96 261.90,126.50 262.25,128.87 262.62,131.30 263.00,134.00 263.39,137.11 263.79,140.50 264.20,144.00 264.63,147.59 265.06,151.30 265.50,155.00 265.93,158.67 266.37,162.33 266.80,166.00 267.22,169.67 267.64,173.33 268.10,177.00 268.60,180.74 269.13,184.48 269.70,188.00 270.30,191.22 270.93,194.22 271.60,197.00 272.30,199.63 273.03,202.04 273.80,204.00 274.62,205.48 275.48,206.52 276.30,207.00 277.06,206.80 277.78,206.04 278.50,205.00 279.21,203.72 279.92,202.17 280.70,200.50 281.59,198.74 282.55,196.87 283.50,195.00 284.40,193.17 285.30,191.33 286.20,189.50 287.12,187.63 288.05,185.77 289.00,184.00 289.97,182.37 290.96,180.85 292.00,179.40 293.13,177.98 294.31,176.63 295.50,175.50 296.70,174.62 297.91,173.95 299.00,173.50 299.89,173.30 300.67,173.31 301.50,173.50 302.46,173.81 303.48,174.30 304.50,175.00 305.52,175.94 306.54,177.11 307.50,178.50 308.36,180.22 309.17,182.17 310.00,184.00 310.91,185.80 311.84,187.48 312.70,188.50 313.43,188.61 314.07,188.06 314.70,187.00 315.32,185.44 315.91,183.39 316.50,181.00 317.08,178.22 317.64,175.11 318.20,172.00 318.76,168.96 319.30,165.93 319.80,163.00 320.23,160.33 320.61,157.78 321.00,155.00 321.41,151.81 321.81,148.41 322.20,145.00 322.56,141.67 322.89,138.33 323.20,135.00 323.49,131.56 323.76,128.11 324.00,125.00 324.21,122.48 324.41,120.30 324.60,118.00 324.78,115.48 324.96,112.85 325.20,110.00 325.52,106.88 325.89,103.53 326.30,100.00 326.76,96.10 327.24,92.01 327.70,88.30 328.09,85.28 328.44,82.64 328.80,80.00 329.19,77.14 329.59,74.29 330.00,71.70 330.41,69.50 330.83,67.56 331.30,65.80 331.83,64.15 332.41,62.68 333.00,61.50 333.60,60.61 334.20,60.02 334.80,59.80 335.38,60.05 335.95,60.67 336.50,61.50 336.98,62.36 337.43,63.41 338.00,65.00 338.76,67.36 339.63,70.25 340.50,73.30 341.33,76.53 342.17,79.91 343.00,83.00 343.80,85.67 344.61,88.04 345.50,90.00 346.51,91.64 347.60,92.87 348.80,93.30 350.18,92.53 351.66,90.96 353.00,89.40 354.13,88.07 355.12,86.76 356.00,85.60 356.72,84.67 357.33,83.90 358.00,83.20 358.67,82.52 359.40,81.91 360.50,81.50 362.16,81.38 364.18,81.45 366.30,81.50 368.57,81.34 370.93,81.16 373.00,81.30 374.59,81.88 375.88,82.79 377.00,84.00 377.98,85.57 378.80,87.45 379.50,89.50 380.09,91.80 380.57,94.26 381.00,96.50 381.36,98.23 381.66,99.74 382.00,101.50 382.44,103.69 382.93,106.12 383.40,108.70 383.88,111.67 384.34,114.78 384.70,117.20 384.85,118.25 384.89,118.61 385.00,119.50 385.25,121.47 385.56,123.96 385.90,126.50 386.25,128.87 386.62,131.30 387.00,134.00 387.39,137.11 387.79,140.50 388.20,144.00 388.63,147.59 389.06,151.30 389.50,155.00 389.93,158.67 390.37,162.33 390.80,166.00 391.22,169.67 391.64,173.33 392.10,177.00 392.60,180.74 393.13,184.48 393.70,188.00 394.30,191.22 394.93,194.22 395.60,197.00 396.30,199.63 397.03,202.04 397.80,204.00 398.62,205.48 399.48,206.52 400.30,207.00 401.06,206.80 401.78,206.04 402.50,205.00 403.21,203.72 403.92,202.17 404.70,200.50 405.59,198.74 406.55,196.87 407.50,195.00 408.40,193.17 409.30,191.33 410.20,189.50 411.12,187.63 412.05,185.77 413.00,184.00 413.97,182.37 414.96,180.85 416.00,179.40 417.13,177.98 418.31,176.63 419.50,175.50 420.70,174.62 421.91,173.95 423.00,173.50 423.89,173.30 424.67,173.31 425.50,173.50 426.46,173.81 427.48,174.30 428.50,175.00 429.52,175.94 430.54,177.11 431.50,178.50 432.36,180.22 433.17,182.17 434.00,184.00 434.91,185.80 435.84,187.48 436.70,188.50 437.43,188.61 438.07,188.06 438.70,187.00 439.32,185.44 439.91,183.39 440.50,181.00 441.08,178.22 441.64,175.11 442.20,172.00 442.76,168.96 443.30,165.93 443.80,163.00 444.23,160.33 444.61,157.78 445.00,155.00 445.41,151.81 445.81,148.41 446.20,145.00 446.56,141.67 446.89,138.33 447.20,135.00 447.49,131.56 447.76,128.11 448.00,125.00 448.21,122.48 448.41,120.30 448.60,118.00 448.78,115.48 448.96,112.85 449.20,110.00 449.52,106.88 449.89,103.53 450.30,100.00 450.76,96.10 451.24,92.01 451.70,88.30 452.09,85.28 452.44,82.64 452.80,80.00 453.19,77.14 453.59,74.29 454.00,71.70 454.41,69.50 454.83,67.56 455.30,65.80 455.83,64.15 456.41,62.68 457.00,61.50 457.60,60.61 458.20,60.02 458.80,59.80 459.38,60.05 459.95,60.67 460.50,61.50 460.98,62.36 461.43,63.41 462.00,65.00 462.76,67.36 463.63,70.25 464.50,73.30 465.33,76.53 466.17,79.91 467.00,83.00 467.80,85.67 468.61,88.04 469.50,90.00 470.51,91.64 471.60,92.87 472.80,93.30 474.18,92.53 475.66,90.96 477.00,89.40 478.13,88.07 479.12,86.76 480.00,85.60 480.72,84.67 481.33,83.90 482.00,83.20 482.67,82.52 483.40,81.91 484.50,81.50 486.16,81.38 488.18,81.45 490.30,81.50 492.57,81.34 494.93,81.16 497.00,81.30 498.59,81.88 499.88,82.79 501.00,84.00 501.98,85.57 502.80,87.45 503.50,89.50 504.09,91.80 504.57,94.26 505.00,96.50 505.36,98.23 505.66,99.74 506.00,101.50 506.44,103.69 506.93,106.12 507.40,108.70 507.88,111.67 508.34,114.78 508.70,117.20 508.85,118.25 508.89,118.61 509.00,119.50 509.25,121.47 509.56,123.96 509.90,126.50 510.25,128.87 510.62,131.30 511.00,134.00 511.39,137.11 511.79,140.50 512.20,144.00 512.63,147.59 513.06,151.30 513.50,155.00 513.93,158.67 514.37,162.33 514.80,166.00 515.22,169.67 515.64,173.33 516.10,177.00 516.60,180.74 517.13,184.48 517.70,188.00 518.30,191.22 518.93,194.22 519.60,197.00 520.30,199.63 521.03,202.04 521.80,204.00 522.62,205.48 523.48,206.52 524.30,207.00 525.06,206.80 525.78,206.04 526.50,205.00 527.21,203.72 527.92,202.17 528.70,200.50 529.59,198.74 530.55,196.87 531.50,195.00 532.40,193.17 533.30,191.33 534.20,189.50 535.12,187.63 536.05,185.77 537.00,184.00 537.97,182.37 538.96,180.85 540.00,179.40 541.13,177.98 542.31,176.63 543.50,175.50 544.70,174.62 545.91,173.95 547.00,173.50 547.89,173.30 548.67,173.31 549.50,173.50 550.46,173.81 551.48,174.30 552.50,175.00 553.52,175.94 554.54,177.11 555.50,178.50 556.36,180.22 557.17,182.17 558.00,184.00 558.91,185.80 559.84,187.48 560.70,188.50 561.43,188.61 562.07,188.06 562.70,187.00 563.32,185.44 563.91,183.39 564.50,181.00 565.08,178.22 565.64,175.11 566.20,172.00 566.76,168.96 567.30,165.93 567.80,163.00 568.23,160.33 568.61,157.78 569.00,155.00 569.41,151.81 569.81,148.41 570.20,145.00 570.56,141.67 570.89,138.33 571.20,135.00 571.49,131.56 571.76,128.11 572.00,125.00 572.21,122.48 572.41,120.30 572.60,118.00 572.78,115.48 572.96,112.85 573.20,110.00 573.52,106.88 573.89,103.53 574.30,100.00 574.76,96.10 575.24,92.01 575.70,88.30 576.09,85.28 576.44,82.64 576.80,80.00 577.19,77.14 577.59,74.29 578.00,71.70 578.41,69.50 578.83,67.56 579.30,65.80 579.83,64.15 580.41,62.68 581.00,61.50 581.60,60.61 582.20,60.02 582.80,59.80 583.38,60.05 583.95,60.67 584.50,61.50 584.98,62.36 585.43,63.41 586.00,65.00 586.76,67.36 587.63,70.25 588.50,73.30 589.33,76.53 590.17,79.91 591.00,83.00 591.80,85.67 592.61,88.04 593.50,90.00 594.51,91.64 595.60,92.87 596.80,93.30 598.18,92.53 599.66,90.96 601.00,89.40 602.13,88.07 603.12,86.76 604.00,85.60 604.72,84.67 605.33,83.90 606.00,83.20 606.67,82.52 607.40,81.91 608.50,81.50 610.16,81.38 612.18,81.45 614.30,81.50 616.57,81.34 618.93,81.16 621.00,81.30 622.59,81.88 623.88,82.79 625.00,84.00 625.98,85.57 626.80,87.45 627.50,89.50 628.09,91.80 628.57,94.26 629.00,96.50 629.36,98.23 629.66,99.74 630.00,101.50 630.44,103.69 630.93,106.12 631.40,108.70 631.88,111.67 632.34,114.78 632.70,117.20 632.89,118.51 632.96,119.13 633.00,119.50" fill="none" stroke="#e800f8" stroke-width="1.45" stroke-linejoin="round"/>
<polyline points="14.50,167.00 14.97,165.57 15.44,164.43 16.00,163.50 16.71,162.72 17.51,162.17 18.30,162.00 19.05,162.33 19.79,163.06 20.50,164.00 21.18,165.15 21.84,166.52 22.50,168.00 23.15,169.59 23.80,171.30 24.50,173.00 25.30,174.72 26.15,176.44 27.00,178.00 27.82,179.37 28.64,180.57 29.50,181.50 30.41,182.09 31.36,182.41 32.30,182.50 33.19,182.36 34.06,181.99 35.00,181.50 36.04,180.89 37.15,180.15 38.30,179.40 39.50,178.66 40.74,177.90 42.00,177.20 43.28,176.57 44.57,175.99 45.80,175.50 46.90,175.12 47.94,174.83 49.00,174.60 50.13,174.40 51.28,174.26 52.40,174.20 53.50,174.22 54.56,174.32 55.50,174.50 56.23,174.71 56.84,174.99 57.50,175.50 58.33,176.33 59.22,177.39 60.00,178.50 60.57,179.61 61.04,180.78 61.50,182.00 62.01,183.22 62.52,184.50 63.00,186.00 63.43,187.85 63.83,189.93 64.20,192.00 64.54,193.94 64.87,195.87 65.20,198.00 65.56,200.20 65.92,202.58 66.30,205.70 66.69,210.17 67.09,215.38 67.50,220.00 67.91,223.39 68.33,226.20 68.80,229.00 69.36,232.11 69.97,235.22 70.50,238.00 70.87,240.07 71.17,241.81 71.50,244.00 71.91,247.04 72.35,250.52 72.80,254.00 73.27,257.48 73.76,260.96 74.20,264.00 74.55,266.26 74.86,268.07 75.20,270.00 75.60,272.22 76.04,274.56 76.50,277.00 76.97,279.70 77.46,282.52 78.00,285.00 78.60,286.99 79.26,288.65 80.00,290.00 80.86,291.10 81.80,291.90 82.70,292.20 83.51,291.87 84.27,291.06 85.00,290.00 85.68,288.72 86.33,287.20 87.00,285.60 87.72,283.96 88.46,282.24 89.20,280.50 89.94,278.71 90.67,276.91 91.40,275.20 92.10,273.64 92.79,272.17 93.50,270.80 94.24,269.51 95.00,268.30 95.80,267.20 96.67,266.17 97.58,265.24 98.50,264.50 99.43,263.98 100.37,263.64 101.30,263.50 102.19,263.53 103.07,263.75 104.00,264.20 105.01,264.99 106.07,266.01 107.10,267.00 108.09,267.83 109.06,268.63 110.00,269.50 110.90,270.51 111.77,271.60 112.60,272.60 113.36,273.52 114.08,274.37 114.80,275.00 115.54,275.38 116.28,275.55 117.00,275.50 117.68,275.23 118.34,274.73 119.00,274.00 119.68,273.02 120.36,271.81 121.00,270.40 121.56,268.90 122.07,267.21 122.60,265.00 123.17,261.93 123.76,258.36 124.30,255.00 124.77,252.09 125.19,249.40 125.60,247.00 126.01,245.16 126.40,243.61 126.80,241.60 127.20,238.63 127.61,235.20 128.00,232.00 128.36,229.42 128.71,227.07 129.10,224.50 129.57,221.50 130.09,218.28 130.60,215.00 131.07,211.66 131.54,208.26 132.00,205.00 132.47,202.03 132.93,199.20 133.40,196.30 133.86,193.25 134.33,190.14 134.80,187.00 135.32,183.66 135.86,180.30 136.30,177.50 136.56,175.69 136.74,174.43 137.00,173.00 137.44,171.02 137.97,168.87 138.50,167.00 138.97,165.57 139.44,164.43 140.00,163.50 140.71,162.72 141.51,162.17 142.30,162.00 143.05,162.33 143.79,163.06 144.50,164.00 145.18,165.15 145.84,166.52 146.50,168.00 147.15,169.59 147.80,171.30 148.50,173.00 149.30,174.72 150.15,176.44 151.00,178.00 151.82,179.37 152.64,180.57 153.50,181.50 154.41,182.09 155.36,182.41 156.30,182.50 157.19,182.36 158.06,181.99 159.00,181.50 160.04,180.89 161.15,180.15 162.30,179.40 163.50,178.66 164.74,177.90 166.00,177.20 167.28,176.57 168.57,175.99 169.80,175.50 170.90,175.12 171.94,174.83 173.00,174.60 174.13,174.40 175.28,174.26 176.40,174.20 177.50,174.22 178.56,174.32 179.50,174.50 180.23,174.71 180.84,174.99 181.50,175.50 182.33,176.33 183.22,177.39 184.00,178.50 184.57,179.61 185.04,180.78 185.50,182.00 186.01,183.22 186.52,184.50 187.00,186.00 187.43,187.85 187.83,189.93 188.20,192.00 188.54,193.94 188.87,195.87 189.20,198.00 189.56,200.20 189.92,202.58 190.30,205.70 190.69,210.17 191.09,215.38 191.50,220.00 191.91,223.39 192.33,226.20 192.80,229.00 193.36,232.11 193.97,235.22 194.50,238.00 194.87,240.07 195.17,241.81 195.50,244.00 195.91,247.04 196.35,250.52 196.80,254.00 197.27,257.48 197.76,260.96 198.20,264.00 198.55,266.26 198.86,268.07 199.20,270.00 199.60,272.22 200.04,274.56 200.50,277.00 200.97,279.70 201.46,282.52 202.00,285.00 202.60,286.99 203.26,288.65 204.00,290.00 204.86,291.10 205.80,291.90 206.70,292.20 207.51,291.87 208.27,291.06 209.00,290.00 209.68,288.72 210.33,287.20 211.00,285.60 211.72,283.96 212.46,282.24 213.20,280.50 213.94,278.71 214.67,276.91 215.40,275.20 216.10,273.64 216.79,272.17 217.50,270.80 218.24,269.51 219.00,268.30 219.80,267.20 220.67,266.17 221.58,265.24 222.50,264.50 223.43,263.98 224.37,263.64 225.30,263.50 226.19,263.53 227.07,263.75 228.00,264.20 229.01,264.99 230.07,266.01 231.10,267.00 232.09,267.83 233.06,268.63 234.00,269.50 234.90,270.51 235.77,271.60 236.60,272.60 237.36,273.52 238.08,274.37 238.80,275.00 239.54,275.38 240.28,275.55 241.00,275.50 241.68,275.23 242.34,274.73 243.00,274.00 243.68,273.02 244.36,271.81 245.00,270.40 245.56,268.90 246.07,267.21 246.60,265.00 247.17,261.93 247.76,258.36 248.30,255.00 248.77,252.09 249.19,249.40 249.60,247.00 250.01,245.16 250.40,243.61 250.80,241.60 251.20,238.63 251.61,235.20 252.00,232.00 252.36,229.42 252.71,227.07 253.10,224.50 253.57,221.50 254.09,218.28 254.60,215.00 255.07,211.66 255.54,208.26 256.00,205.00 256.47,202.03 256.93,199.20 257.40,196.30 257.86,193.25 258.33,190.14 258.80,187.00 259.32,183.66 259.86,180.30 260.30,177.50 260.56,175.69 260.74,174.43 261.00,173.00 261.44,171.02 261.97,168.87 262.50,167.00 262.97,165.57 263.44,164.43 264.00,163.50 264.71,162.72 265.51,162.17 266.30,162.00 267.05,162.33 267.79,163.06 268.50,164.00 269.18,165.15 269.84,166.52 270.50,168.00 271.15,169.59 271.80,171.30 272.50,173.00 273.30,174.72 274.15,176.44 275.00,178.00 275.82,179.37 276.64,180.57 277.50,181.50 278.41,182.09 279.36,182.41 280.30,182.50 281.19,182.36 282.06,181.99 283.00,181.50 284.04,180.89 285.15,180.15 286.30,179.40 287.50,178.66 288.74,177.90 290.00,177.20 291.28,176.57 292.57,175.99 293.80,175.50 294.90,175.12 295.94,174.83 297.00,174.60 298.13,174.40 299.28,174.26 300.40,174.20 301.50,174.22 302.56,174.32 303.50,174.50 304.23,174.71 304.84,174.99 305.50,175.50 306.33,176.33 307.22,177.39 308.00,178.50 308.57,179.61 309.04,180.78 309.50,182.00 310.01,183.22 310.52,184.50 311.00,186.00 311.43,187.85 311.83,189.93 312.20,192.00 312.54,193.94 312.87,195.87 313.20,198.00 313.56,200.20 313.92,202.58 314.30,205.70 314.69,210.17 315.09,215.38 315.50,220.00 315.91,223.39 316.33,226.20 316.80,229.00 317.36,232.11 317.97,235.22 318.50,238.00 318.87,240.07 319.17,241.81 319.50,244.00 319.91,247.04 320.35,250.52 320.80,254.00 321.27,257.48 321.76,260.96 322.20,264.00 322.55,266.26 322.86,268.07 323.20,270.00 323.60,272.22 324.04,274.56 324.50,277.00 324.97,279.70 325.46,282.52 326.00,285.00 326.60,286.99 327.26,288.65 328.00,290.00 328.86,291.10 329.80,291.90 330.70,292.20 331.51,291.87 332.27,291.06 333.00,290.00 333.68,288.72 334.33,287.20 335.00,285.60 335.72,283.96 336.46,282.24 337.20,280.50 337.94,278.71 338.67,276.91 339.40,275.20 340.10,273.64 340.79,272.17 341.50,270.80 342.24,269.51 343.00,268.30 343.80,267.20 344.67,266.17 345.58,265.24 346.50,264.50 347.43,263.98 348.37,263.64 349.30,263.50 350.19,263.53 351.07,263.75 352.00,264.20 353.01,264.99 354.07,266.01 355.10,267.00 356.09,267.83 357.06,268.63 358.00,269.50 358.90,270.51 359.77,271.60 360.60,272.60 361.36,273.52 362.08,274.37 362.80,275.00 363.54,275.38 364.28,275.55 365.00,275.50 365.68,275.23 366.34,274.73 367.00,274.00 367.68,273.02 368.36,271.81 369.00,270.40 369.56,268.90 370.07,267.21 370.60,265.00 371.17,261.93 371.76,258.36 372.30,255.00 372.77,252.09 373.19,249.40 373.60,247.00 374.01,245.16 374.40,243.61 374.80,241.60 375.20,238.63 375.61,235.20 376.00,232.00 376.36,229.42 376.71,227.07 377.10,224.50 377.57,221.50 378.09,218.28 378.60,215.00 379.07,211.66 379.54,208.26 380.00,205.00 380.47,202.03 380.93,199.20 381.40,196.30 381.86,193.25 382.33,190.14 382.80,187.00 383.32,183.66 383.86,180.30 384.30,177.50 384.56,175.69 384.74,174.43 385.00,173.00 385.44,171.02 385.97,168.87 386.50,167.00 386.97,165.57 387.44,164.43 388.00,163.50 388.71,162.72 389.51,162.17 390.30,162.00 391.05,162.33 391.79,163.06 392.50,164.00 393.18,165.15 393.84,166.52 394.50,168.00 395.15,169.59 395.80,171.30 396.50,173.00 397.30,174.72 398.15,176.44 399.00,178.00 399.82,179.37 400.64,180.57 401.50,181.50 402.41,182.09 403.36,182.41 404.30,182.50 405.19,182.36 406.06,181.99 407.00,181.50 408.04,180.89 409.15,180.15 410.30,179.40 411.50,178.66 412.74,177.90 414.00,177.20 415.28,176.57 416.57,175.99 417.80,175.50 418.90,175.12 419.94,174.83 421.00,174.60 422.13,174.40 423.28,174.26 424.40,174.20 425.50,174.22 426.56,174.32 427.50,174.50 428.23,174.71 428.84,174.99 429.50,175.50 430.33,176.33 431.22,177.39 432.00,178.50 432.57,179.61 433.04,180.78 433.50,182.00 434.01,183.22 434.52,184.50 435.00,186.00 435.43,187.85 435.83,189.93 436.20,192.00 436.54,193.94 436.87,195.87 437.20,198.00 437.56,200.20 437.92,202.58 438.30,205.70 438.69,210.17 439.09,215.38 439.50,220.00 439.91,223.39 440.33,226.20 440.80,229.00 441.36,232.11 441.97,235.22 442.50,238.00 442.87,240.07 443.17,241.81 443.50,244.00 443.91,247.04 444.35,250.52 444.80,254.00 445.27,257.48 445.76,260.96 446.20,264.00 446.55,266.26 446.86,268.07 447.20,270.00 447.60,272.22 448.04,274.56 448.50,277.00 448.97,279.70 449.46,282.52 450.00,285.00 450.60,286.99 451.26,288.65 452.00,290.00 452.86,291.10 453.80,291.90 454.70,292.20 455.51,291.87 456.27,291.06 457.00,290.00 457.68,288.72 458.33,287.20 459.00,285.60 459.72,283.96 460.46,282.24 461.20,280.50 461.94,278.71 462.67,276.91 463.40,275.20 464.10,273.64 464.79,272.17 465.50,270.80 466.24,269.51 467.00,268.30 467.80,267.20 468.67,266.17 469.58,265.24 470.50,264.50 471.43,263.98 472.37,263.64 473.30,263.50 474.19,263.53 475.07,263.75 476.00,264.20 477.01,264.99 478.07,266.01 479.10,267.00 480.09,267.83 481.06,268.63 482.00,269.50 482.90,270.51 483.77,271.60 484.60,272.60 485.36,273.52 486.08,274.37 486.80,275.00 487.54,275.38 488.28,275.55 489.00,275.50 489.68,275.23 490.34,274.73 491.00,274.00 491.68,273.02 492.36,271.81 493.00,270.40 493.56,268.90 494.07,267.21 494.60,265.00 495.17,261.93 495.76,258.36 496.30,255.00 496.77,252.09 497.19,249.40 497.60,247.00 498.01,245.16 498.40,243.61 498.80,241.60 499.20,238.63 499.61,235.20 500.00,232.00 500.36,229.42 500.71,227.07 501.10,224.50 501.57,221.50 502.09,218.28 502.60,215.00 503.07,211.66 503.54,208.26 504.00,205.00 504.47,202.03 504.93,199.20 505.40,196.30 505.86,193.25 506.33,190.14 506.80,187.00 507.32,183.66 507.86,180.30 508.30,177.50 508.56,175.69 508.74,174.43 509.00,173.00 509.44,171.02 509.97,168.87 510.50,167.00 510.97,165.57 511.44,164.43 512.00,163.50 512.71,162.72 513.51,162.17 514.30,162.00 515.05,162.33 515.79,163.06 516.50,164.00 517.18,165.15 517.84,166.52 518.50,168.00 519.15,169.59 519.80,171.30 520.50,173.00 521.30,174.72 522.15,176.44 523.00,178.00 523.82,179.37 524.64,180.57 525.50,181.50 526.41,182.09 527.36,182.41 528.30,182.50 529.19,182.36 530.06,181.99 531.00,181.50 532.04,180.89 533.15,180.15 534.30,179.40 535.50,178.66 536.74,177.90 538.00,177.20 539.28,176.57 540.57,175.99 541.80,175.50 542.90,175.12 543.94,174.83 545.00,174.60 546.13,174.40 547.28,174.26 548.40,174.20 549.50,174.22 550.56,174.32 551.50,174.50 552.23,174.71 552.84,174.99 553.50,175.50 554.33,176.33 555.22,177.39 556.00,178.50 556.57,179.61 557.04,180.78 557.50,182.00 558.01,183.22 558.52,184.50 559.00,186.00 559.43,187.85 559.83,189.93 560.20,192.00 560.54,193.94 560.87,195.87 561.20,198.00 561.56,200.20 561.92,202.58 562.30,205.70 562.69,210.17 563.09,215.38 563.50,220.00 563.91,223.39 564.33,226.20 564.80,229.00 565.36,232.11 565.97,235.22 566.50,238.00 566.87,240.07 567.17,241.81 567.50,244.00 567.91,247.04 568.35,250.52 568.80,254.00 569.27,257.48 569.76,260.96 570.20,264.00 570.55,266.26 570.86,268.07 571.20,270.00 571.60,272.22 572.04,274.56 572.50,277.00 572.97,279.70 573.46,282.52 574.00,285.00 574.60,286.99 575.26,288.65 576.00,290.00 576.86,291.10 577.80,291.90 578.70,292.20 579.51,291.87 580.27,291.06 581.00,290.00 581.68,288.72 582.33,287.20 583.00,285.60 583.72,283.96 584.46,282.24 585.20,280.50 585.94,278.71 586.67,276.91 587.40,275.20 588.10,273.64 588.79,272.17 589.50,270.80 590.24,269.51 591.00,268.30 591.80,267.20 592.67,266.17 593.58,265.24 594.50,264.50 595.43,263.98 596.37,263.64 597.30,263.50 598.19,263.53 599.07,263.75 600.00,264.20 601.01,264.99 602.07,266.01 603.10,267.00 604.09,267.83 605.06,268.63 606.00,269.50 606.90,270.51 607.77,271.60 608.60,272.60 609.36,273.52 610.08,274.37 610.80,275.00 611.54,275.38 612.28,275.55 613.00,275.50 613.68,275.23 614.34,274.73 615.00,274.00 615.68,273.02 616.36,271.81 617.00,270.40 617.56,268.90 618.07,267.21 618.60,265.00 619.17,261.93 619.76,258.36 620.30,255.00 620.77,252.09 621.19,249.40 621.60,247.00 622.01,245.16 622.40,243.61 622.80,241.60 623.20,238.63 623.61,235.20 624.00,232.00 624.36,229.42 624.71,227.07 625.10,224.50 625.57,221.50 626.09,218.28 626.60,215.00 627.07,211.66 627.54,208.26 628.00,205.00 628.47,202.03 628.93,199.20 629.40,196.30 629.86,193.25 630.33,190.14 630.80,187.00 631.32,183.66 631.86,180.30 632.30,177.50 632.62,175.46 632.85,173.98 633.00,173.00" fill="none" stroke="#00ee00" stroke-width="1.45" stroke-linejoin="round"/>
<!-- C3 marker -->
<text x="4.8" y="132" font-family="Liberation Sans" font-size="10" fill="#f800ff">3</text>
<line x1="15" y1="128.5" x2="19" y2="128.5" stroke="#f800ff" stroke-width="1.2"/>
<polygon points="18.5,126 22.5,128.5 18.5,131" fill="#f800ff"/>
<!-- C4 marker -->
<rect x="0" y="217" width="15" height="10" fill="#00fa00"/>
<text x="5" y="226" font-family="Liberation Sans" font-size="10" fill="#003000">4</text>
<line x1="15" y1="222.5" x2="19" y2="222.5" stroke="#00fa00" stroke-width="1.2"/>
<polygon points="18.5,220 22.5,222.5 18.5,225" fill="#00fa00"/>
<polygon points="318,129.5 326,129.5 322,134.5" fill="#f800ff"/>
<!-- trigger level arrow right -->
<line x1="623" y1="118.5" x2="630" y2="118.5" stroke="#f800ff" stroke-width="1.2"/>
<polygon points="619,118.5 624,115.5 624,121.5" fill="#f800ff"/>
</svg>
<div class="panel" style="left:14px;top:416px;width:145px;height:59px;"></div>
<div class="box" style="left:19px;top:422px;width:5px;background:#f800ff;"></div>
<div class="box" style="left:24px;top:422px;width:18px;background:#fff;"></div>
<div class="t" style="left:25px;top:421px;color:#222;-webkit-text-stroke:0;">C3</div>
<div class="box" style="left:19px;top:434px;width:5px;background:#00fa00;"></div>
<div class="box" style="left:24px;top:434px;width:18px;background:#fff;"></div>
<div class="t" style="left:25px;top:433px;color:#222;-webkit-text-stroke:0;">C4</div>
<div class="t" style="left:57px;top:419.5px;">500mV</div>
<div class="t" style="left:101px;top:419.5px;">&#937;</div>
<div class="t" style="left:57px;top:431.5px;">500mV</div>
<div class="t" style="left:101px;top:431.5px;">&#937;</div>
<div class="panel" style="left:514px;top:416px;width:120px;height:59px;"></div>
<div class="t" style="left:519.5px;top:420px;">500ps/div</div>
<div class="t" style="left:519.5px;top:432px;">10.0GS/s IT 10.0ps/pt</div>
<div class="box" style="left:520px;top:446px;width:10px;background:#f800ff;"></div>
<div class="t" style="left:521px;top:445px;color:#000;-webkit-text-stroke:0;">A</div>
<div class="box" style="left:530px;top:446px;width:17px;background:#fff;"></div>
<div class="t" style="left:531px;top:445px;color:#222;-webkit-text-stroke:0;">C3</div>
<svg width="635" height="480" style="left:0;top:0"><path d="M550,452.5 L552.5,452.5 Q553.5,452 554,450 Q554.5,447.5 556.5,447.5" fill="none" stroke="#e0e0e0" stroke-width="1.3"/></svg>
<div class="t" style="left:560px;top:444px;">100.0mV</div>
</div></body></html>
